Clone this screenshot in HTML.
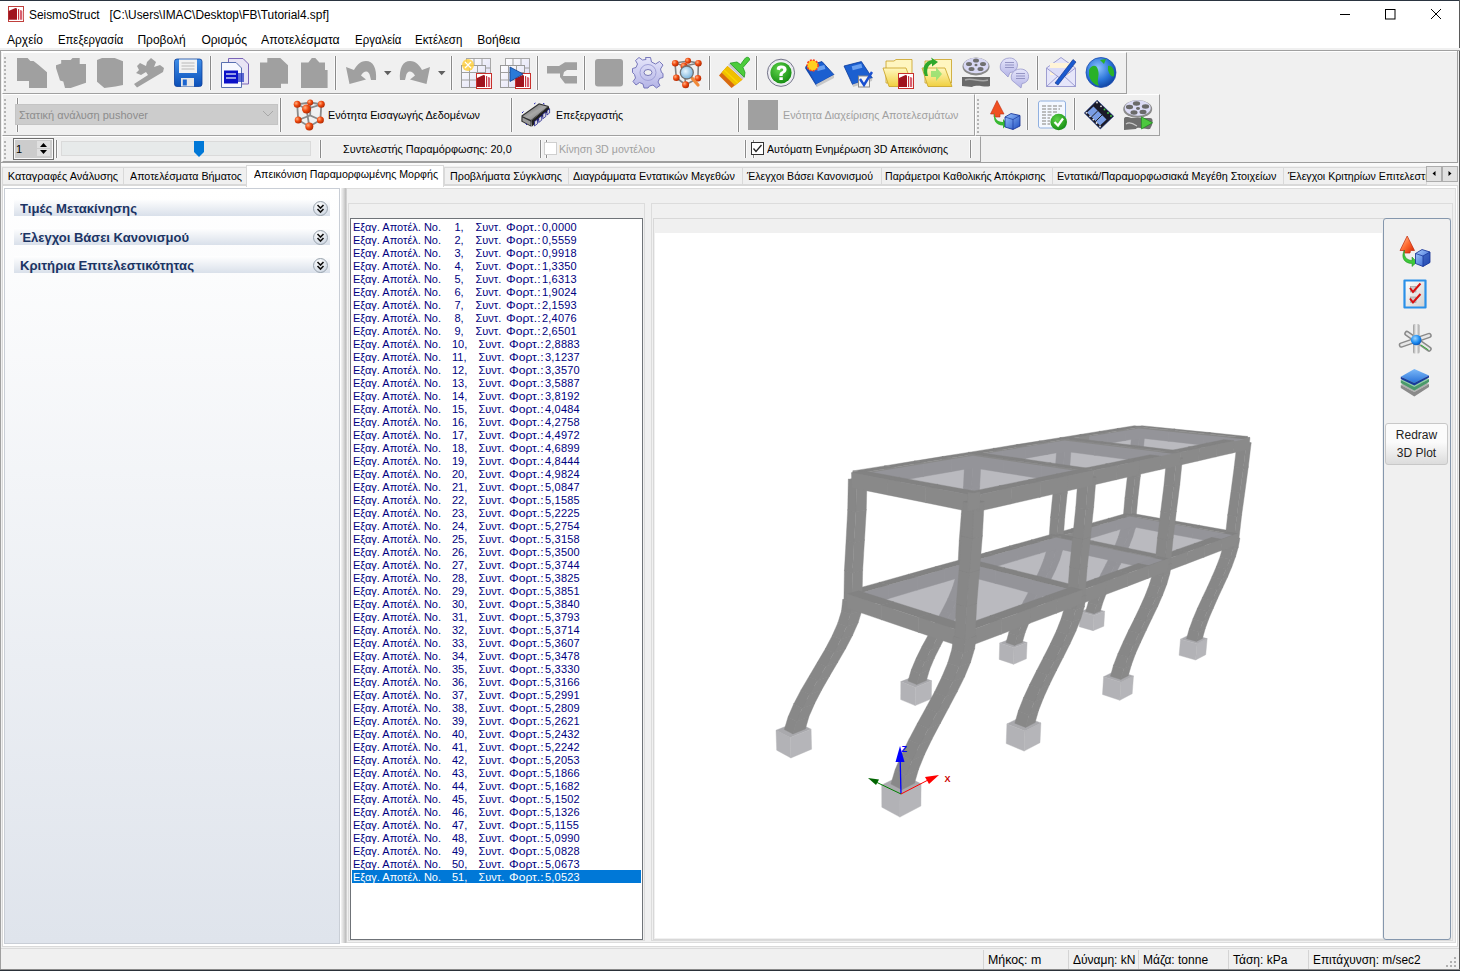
<!DOCTYPE html><html><head><meta charset="utf-8"><style>
*{margin:0;padding:0;box-sizing:border-box}
html,body{width:1460px;height:971px;overflow:hidden;background:#f0f0f0;font-family:"Liberation Sans",sans-serif;font-size:11px;color:#000}
.a{position:absolute}
.t{position:absolute;white-space:pre;line-height:1}
.s{display:inline-block;transform-origin:0 0}
</style></head><body>
<div class="a" style="left:0;top:0;width:1460px;height:1px;background:#2a3440"></div>
<div class="a" style="left:0;top:1px;width:1460px;height:47px;background:#fff"></div>
<div class="a" style="left:1459px;top:0;width:1px;height:971px;background:#5a5a5a"></div>
<div class="t" style="left:29px;top:9px;font-size:12px;color:#000;font-weight:normal;"><span class="s" style="transform:scaleX(0.9902)">SeismoStruct   [C:\Users\IMAC\Desktop\FB\Tutorial4.spf]</span></div>
<div class="t" style="left:7px;top:34px;font-size:12px;color:#000;font-weight:normal;">Αρχείο</div>
<div class="t" style="left:57.5px;top:34px;font-size:12px;color:#000;font-weight:normal;"><span class="s" style="transform:scaleX(0.9430)">Επεξεργασία</span></div>
<div class="t" style="left:137.4px;top:34px;font-size:12px;color:#000;font-weight:normal;">Προβολή</div>
<div class="t" style="left:201.4px;top:34px;font-size:12px;color:#000;font-weight:normal;">Ορισμός</div>
<div class="t" style="left:261.1px;top:34px;font-size:12px;color:#000;font-weight:normal;"><span class="s" style="transform:scaleX(1.0244)">Αποτελέσματα</span></div>
<div class="t" style="left:354.6px;top:34px;font-size:12px;color:#000;font-weight:normal;"><span class="s" style="transform:scaleX(0.9542)">Εργαλεία</span></div>
<div class="t" style="left:415.3px;top:34px;font-size:12px;color:#000;font-weight:normal;"><span class="s" style="transform:scaleX(0.9550)">Εκτέλεση</span></div>
<div class="t" style="left:477.3px;top:34px;font-size:12px;color:#000;font-weight:normal;">Βοήθεια</div>
<div class="a" style="left:0;top:48px;width:1460px;height:2px;background:#f0f0f0"></div>
<div class="a" style="left:0;top:50px;width:1460px;height:1px;background:#a0a0a0"></div>
<div class="a" style="left:0;top:50px;width:1px;height:921px;background:#a0a0a0"></div>
<div class="a" style="left:1px;top:51px;width:1456px;height:1px;background:#fff"></div>
<div class="a" style="left:1457px;top:50px;width:1px;height:113px;background:#a0a0a0"></div>
<div class="a" style="left:0;top:162px;width:1458px;height:1px;background:#a0a0a0"></div>
<div class="a" style="left:2px;top:52px;width:1125px;height:42px;border-top:1px solid #fff;border-left:1px solid #fff;border-right:1px solid #a0a0a0;border-bottom:1px solid #a0a0a0;background:#f0f0f0"></div>
<div class="a" style="left:4px;top:57px;width:2px;height:2px;background:#b4b4b4"></div>
<div class="a" style="left:4px;top:61px;width:2px;height:2px;background:#b4b4b4"></div>
<div class="a" style="left:4px;top:65px;width:2px;height:2px;background:#b4b4b4"></div>
<div class="a" style="left:4px;top:69px;width:2px;height:2px;background:#b4b4b4"></div>
<div class="a" style="left:4px;top:73px;width:2px;height:2px;background:#b4b4b4"></div>
<div class="a" style="left:4px;top:77px;width:2px;height:2px;background:#b4b4b4"></div>
<div class="a" style="left:4px;top:81px;width:2px;height:2px;background:#b4b4b4"></div>
<div class="a" style="left:4px;top:85px;width:2px;height:2px;background:#b4b4b4"></div>
<div class="a" style="left:4px;top:89px;width:2px;height:2px;background:#b4b4b4"></div>
<div class="a" style="left:2px;top:94px;width:973px;height:42px;border-top:1px solid #fff;border-left:1px solid #fff;border-right:1px solid #a0a0a0;border-bottom:1px solid #a0a0a0;background:#f0f0f0"></div>
<div class="a" style="left:4px;top:99px;width:2px;height:2px;background:#b4b4b4"></div>
<div class="a" style="left:4px;top:103px;width:2px;height:2px;background:#b4b4b4"></div>
<div class="a" style="left:4px;top:107px;width:2px;height:2px;background:#b4b4b4"></div>
<div class="a" style="left:4px;top:111px;width:2px;height:2px;background:#b4b4b4"></div>
<div class="a" style="left:4px;top:115px;width:2px;height:2px;background:#b4b4b4"></div>
<div class="a" style="left:4px;top:119px;width:2px;height:2px;background:#b4b4b4"></div>
<div class="a" style="left:4px;top:123px;width:2px;height:2px;background:#b4b4b4"></div>
<div class="a" style="left:4px;top:127px;width:2px;height:2px;background:#b4b4b4"></div>
<div class="a" style="left:4px;top:131px;width:2px;height:2px;background:#b4b4b4"></div>
<div class="a" style="left:975px;top:94px;width:185px;height:42px;border-top:1px solid #fff;border-left:1px solid #fff;border-right:1px solid #a0a0a0;border-bottom:1px solid #a0a0a0;background:#f0f0f0"></div>
<div class="a" style="left:977px;top:99px;width:2px;height:2px;background:#b4b4b4"></div>
<div class="a" style="left:977px;top:103px;width:2px;height:2px;background:#b4b4b4"></div>
<div class="a" style="left:977px;top:107px;width:2px;height:2px;background:#b4b4b4"></div>
<div class="a" style="left:977px;top:111px;width:2px;height:2px;background:#b4b4b4"></div>
<div class="a" style="left:977px;top:115px;width:2px;height:2px;background:#b4b4b4"></div>
<div class="a" style="left:977px;top:119px;width:2px;height:2px;background:#b4b4b4"></div>
<div class="a" style="left:977px;top:123px;width:2px;height:2px;background:#b4b4b4"></div>
<div class="a" style="left:977px;top:127px;width:2px;height:2px;background:#b4b4b4"></div>
<div class="a" style="left:977px;top:131px;width:2px;height:2px;background:#b4b4b4"></div>
<div class="a" style="left:2px;top:136px;width:979px;height:26px;border-top:1px solid #fff;border-left:1px solid #fff;border-right:1px solid #a0a0a0;border-bottom:1px solid #a0a0a0;background:#f0f0f0"></div>
<div class="a" style="left:4px;top:141px;width:2px;height:2px;background:#b4b4b4"></div>
<div class="a" style="left:4px;top:145px;width:2px;height:2px;background:#b4b4b4"></div>
<div class="a" style="left:4px;top:149px;width:2px;height:2px;background:#b4b4b4"></div>
<div class="a" style="left:4px;top:153px;width:2px;height:2px;background:#b4b4b4"></div>
<div class="a" style="left:4px;top:157px;width:2px;height:2px;background:#b4b4b4"></div>
<div class="a" style="left:209px;top:56px;width:3px;height:34px;background:#fafafa"></div>
<div class="a" style="left:210px;top:56px;width:1px;height:34px;background:#8a8a8a"></div>
<div class="a" style="left:334px;top:56px;width:3px;height:34px;background:#fafafa"></div>
<div class="a" style="left:335px;top:56px;width:1px;height:34px;background:#8a8a8a"></div>
<div class="a" style="left:450px;top:56px;width:3px;height:34px;background:#fafafa"></div>
<div class="a" style="left:451px;top:56px;width:1px;height:34px;background:#8a8a8a"></div>
<div class="a" style="left:536px;top:56px;width:3px;height:34px;background:#fafafa"></div>
<div class="a" style="left:537px;top:56px;width:1px;height:34px;background:#8a8a8a"></div>
<div class="a" style="left:583px;top:56px;width:3px;height:34px;background:#fafafa"></div>
<div class="a" style="left:584px;top:56px;width:1px;height:34px;background:#8a8a8a"></div>
<div class="a" style="left:708px;top:56px;width:3px;height:34px;background:#fafafa"></div>
<div class="a" style="left:709px;top:56px;width:1px;height:34px;background:#8a8a8a"></div>
<div class="a" style="left:755px;top:56px;width:3px;height:34px;background:#fafafa"></div>
<div class="a" style="left:756px;top:56px;width:1px;height:34px;background:#8a8a8a"></div>
<div class="a" style="left:1036px;top:56px;width:3px;height:34px;background:#fafafa"></div>
<div class="a" style="left:1037px;top:56px;width:1px;height:34px;background:#8a8a8a"></div>
<div class="a" style="left:16px;top:98px;width:3px;height:34px;background:#fafafa"></div>
<div class="a" style="left:17px;top:98px;width:1px;height:34px;background:#8a8a8a"></div>
<div class="a" style="left:279px;top:98px;width:3px;height:34px;background:#fafafa"></div>
<div class="a" style="left:280px;top:98px;width:1px;height:34px;background:#8a8a8a"></div>
<div class="a" style="left:510px;top:98px;width:3px;height:34px;background:#fafafa"></div>
<div class="a" style="left:511px;top:98px;width:1px;height:34px;background:#8a8a8a"></div>
<div class="a" style="left:737px;top:98px;width:3px;height:34px;background:#fafafa"></div>
<div class="a" style="left:738px;top:98px;width:1px;height:34px;background:#8a8a8a"></div>
<div class="a" style="left:1026px;top:98px;width:3px;height:32px;background:#fafafa"></div>
<div class="a" style="left:1027px;top:98px;width:1px;height:32px;background:#8a8a8a"></div>
<div class="a" style="left:1073px;top:98px;width:3px;height:32px;background:#fafafa"></div>
<div class="a" style="left:1074px;top:98px;width:1px;height:32px;background:#8a8a8a"></div>
<div class="a" style="left:55px;top:140px;width:3px;height:18px;background:#fafafa"></div>
<div class="a" style="left:56px;top:140px;width:1px;height:18px;background:#8a8a8a"></div>
<div class="a" style="left:319px;top:140px;width:3px;height:18px;background:#fafafa"></div>
<div class="a" style="left:320px;top:140px;width:1px;height:18px;background:#8a8a8a"></div>
<div class="a" style="left:539px;top:140px;width:3px;height:18px;background:#fafafa"></div>
<div class="a" style="left:540px;top:140px;width:1px;height:18px;background:#8a8a8a"></div>
<div class="a" style="left:744px;top:140px;width:3px;height:18px;background:#fafafa"></div>
<div class="a" style="left:745px;top:140px;width:1px;height:18px;background:#8a8a8a"></div>
<div class="a" style="left:969px;top:140px;width:3px;height:18px;background:#fafafa"></div>
<div class="a" style="left:970px;top:140px;width:1px;height:18px;background:#8a8a8a"></div>
<div class="a" style="left:545px;top:140px;width:3px;height:18px;background:#fafafa"></div>
<div class="a" style="left:546px;top:140px;width:1px;height:18px;background:#8a8a8a"></div>
<div class="a" style="left:752px;top:140px;width:3px;height:18px;background:#fafafa"></div>
<div class="a" style="left:753px;top:140px;width:1px;height:18px;background:#8a8a8a"></div>
<div class="a" style="left:15px;top:104px;width:263px;height:21px;background:#cccccc;border:1px solid #c4c4c4"></div>
<div class="t" style="left:19px;top:110px;font-size:11px;color:#8d8d8d;font-weight:normal;">Στατική ανάλυση pushover</div>
<svg class="a" style="left:262px;top:110px" width="12" height="8"><path d="M1 1 L6 6 L11 1" stroke="#a8a8a8" fill="none" stroke-width="1"/></svg>
<div class="t" style="left:328px;top:110px;font-size:11px;color:#000;font-weight:normal;"><span class="s" style="transform:scaleX(0.9833)">Ενότητα Εισαγωγής Δεδομένων</span></div>
<div class="t" style="left:555.5px;top:110px;font-size:11px;color:#000;font-weight:normal;"><span class="s" style="transform:scaleX(0.9553)">Επεξεργαστής</span></div>
<div class="a" style="left:748px;top:100px;width:30px;height:30px;background:#a0a0a0"></div>
<div class="t" style="left:782.5px;top:110px;font-size:11px;color:#a0a0a0;font-weight:normal;"><span class="s" style="transform:scaleX(0.9802)">Ενότητα Διαχείρισης Αποτελεσμάτων</span></div>
<div class="a" style="left:13px;top:138px;width:41px;height:22px;border:1px solid #6e6e6e;background:#f8f8f8"></div>
<div class="a" style="left:15px;top:140px;width:37px;height:18px;background:#cccccc"></div>
<div class="t" style="left:16px;top:144px;font-size:11px;color:#000;font-weight:normal;">1</div>
<div class="a" style="left:37px;top:141px;width:13px;height:7px;background:#e0e0e0"></div>
<div class="a" style="left:37px;top:149px;width:13px;height:7px;background:#e0e0e0"></div>
<svg class="a" style="left:37px;top:141px" width="13" height="16"><path d="M3 6 L6.5 2 L10 6Z M3 9 L6.5 13 L10 9Z" fill="#000"/></svg>
<div class="a" style="left:61px;top:141px;width:250px;height:15px;background:#e7eaea;border:1px solid #dadada"></div>
<svg class="a" style="left:194px;top:141px" width="10" height="16"><path d="M0 0 H10 V11 L5 16 L0 11Z" fill="#0078d7"/></svg>
<div class="t" style="left:342.7px;top:144px;font-size:11px;color:#000;font-weight:normal;"><span class="s" style="transform:scaleX(0.9884)">Συντελεστής Παραμόρφωσης: 20,0</span></div>
<div class="a" style="left:544px;top:142px;width:13px;height:13px;border:1px solid #cfcfcf;background:#fff"></div>
<div class="t" style="left:559px;top:144px;font-size:11px;color:#a0a0a0;font-weight:normal;"><span class="s" style="transform:scaleX(0.9682)">Κίνηση 3D μοντέλου</span></div>
<div class="a" style="left:751px;top:142px;width:13px;height:13px;border:1px solid #333;background:#fff"></div>
<svg class="a" style="left:751px;top:142px" width="13" height="13"><path d="M2.5 6.5 L5 9.5 L10.5 3" stroke="#222" fill="none" stroke-width="1.3"/></svg>
<div class="t" style="left:767px;top:144px;font-size:11px;color:#000;font-weight:normal;"><span class="s" style="transform:scaleX(0.9624)">Αυτόματη Ενημέρωση 3D Απεικόνισης</span></div>
<div class="a" style="left:1px;top:163px;width:1458px;height:3px;background:#fafafa"></div>
<div class="a" style="left:2px;top:167px;width:122px;height:18px;border:1px solid #d9d9d9;background:#f0f0f0"></div>
<div class="t" style="left:7.7px;top:171px;font-size:11px;color:#000;font-weight:normal;">Καταγραφές Ανάλυσης</div>
<div class="a" style="left:123px;top:167px;width:124px;height:18px;border:1px solid #d9d9d9;background:#f0f0f0"></div>
<div class="t" style="left:129.8px;top:171px;font-size:11px;color:#000;font-weight:normal;"><span class="s" style="transform:scaleX(0.9718)">Αποτελέσματα Βήματος</span></div>
<div class="a" style="left:444px;top:167px;width:125px;height:18px;border:1px solid #d9d9d9;background:#f0f0f0"></div>
<div class="t" style="left:449.5px;top:171px;font-size:11px;color:#000;font-weight:normal;"><span class="s" style="transform:scaleX(0.9778)">Προβλήματα Σύγκλισης</span></div>
<div class="a" style="left:568px;top:167px;width:175px;height:18px;border:1px solid #d9d9d9;background:#f0f0f0"></div>
<div class="t" style="left:573.3px;top:171px;font-size:11px;color:#000;font-weight:normal;"><span class="s" style="transform:scaleX(0.9861)">Διαγράμματα Εντατικών Μεγεθών</span></div>
<div class="a" style="left:742px;top:167px;width:140px;height:18px;border:1px solid #d9d9d9;background:#f0f0f0"></div>
<div class="t" style="left:747px;top:171px;font-size:11px;color:#000;font-weight:normal;"><span class="s" style="transform:scaleX(0.9625)">Έλεγχοι Βάσει Κανονισμού</span></div>
<div class="a" style="left:881px;top:167px;width:172px;height:18px;border:1px solid #d9d9d9;background:#f0f0f0"></div>
<div class="t" style="left:885.4px;top:171px;font-size:11px;color:#000;font-weight:normal;"><span class="s" style="transform:scaleX(0.9619)">Παράμετροι Καθολικής Απόκρισης</span></div>
<div class="a" style="left:1052px;top:167px;width:232px;height:18px;border:1px solid #d9d9d9;background:#f0f0f0"></div>
<div class="t" style="left:1056.7px;top:171px;font-size:11px;color:#000;font-weight:normal;"><span class="s" style="transform:scaleX(0.9848)">Εντατικά/Παραμορφωσιακά Μεγέθη Στοιχείων</span></div>
<div class="a" style="left:1283px;top:167px;width:144px;height:18px;border:1px solid #d9d9d9;background:#f0f0f0"></div>
<div class="a" style="left:1284px;top:168px;width:142px;height:16px;overflow:hidden">
<div class="t" style="left:4px;top:3px;font-size:11px;color:#000;font-weight:normal;transform:scaleX(0.965);transform-origin:0 0;">Έλεγχοι Κριτηρίων Επιτελεστικότητας</div>
</div>
<div class="a" style="left:2px;top:185px;width:1456px;height:762px;border:1px solid #d9d9d9;background:#fff"></div>
<div class="a" style="left:246px;top:165px;width:198px;height:22px;border:1px solid #d9d9d9;border-bottom:none;background:#fff"></div>
<div class="t" style="left:253.8px;top:169px;font-size:11px;color:#000;font-weight:normal;"><span class="s" style="transform:scaleX(0.9668)">Απεικόνιση Παραμορφωμένης Μορφής</span></div>
<div class="a" style="left:1426px;top:166px;width:16px;height:16px;border:1px solid #adadad;background:#e1e1e1"></div>
<div class="a" style="left:1442px;top:166px;width:16px;height:16px;border:1px solid #adadad;background:#e1e1e1"></div>
<svg class="a" style="left:1426px;top:166px" width="32" height="16"><path d="M9.5 5 L6.5 7.5 L9.5 10Z M22.5 5 L25.5 7.5 L22.5 10Z" fill="#000"/></svg>
<div class="a" style="left:4px;top:188px;width:336px;height:756px;border:1px solid #c9ced6;background:linear-gradient(#ffffff,#dfe4ec)"></div>
<div class="a" style="left:14px;top:199px;width:316px;height:17px;background:linear-gradient(#ffffff,#d9e0ea)"></div>
<div class="t" style="left:20px;top:202px;font-size:13px;color:#1b3464;font-weight:bold;"><span class="s" style="transform:scaleX(1.0123)">Τιμές Μετακίνησης</span></div>
<svg class="a" style="left:312px;top:200px" width="17" height="17"><defs><radialGradient id="g199" cx="0.4" cy="0.3" r="0.8"><stop offset="0" stop-color="#fff"/><stop offset="1" stop-color="#c9d3e0"/></radialGradient></defs><circle cx="8.5" cy="8.5" r="7" fill="url(#g199)" stroke="#9aa4ae"/><path d="M5.5 5 L8.5 8 L11.5 5 M5.5 9 L8.5 12 L11.5 9" stroke="#111" fill="none" stroke-width="1.6"/></svg>
<div class="a" style="left:14px;top:228px;width:316px;height:17px;background:linear-gradient(#ffffff,#d9e0ea)"></div>
<div class="t" style="left:20px;top:231px;font-size:13px;color:#1b3464;font-weight:bold;">Έλεγχοι Βάσει Κανονισμού</div>
<svg class="a" style="left:312px;top:229px" width="17" height="17"><defs><radialGradient id="g228" cx="0.4" cy="0.3" r="0.8"><stop offset="0" stop-color="#fff"/><stop offset="1" stop-color="#c9d3e0"/></radialGradient></defs><circle cx="8.5" cy="8.5" r="7" fill="url(#g228)" stroke="#9aa4ae"/><path d="M5.5 5 L8.5 8 L11.5 5 M5.5 9 L8.5 12 L11.5 9" stroke="#111" fill="none" stroke-width="1.6"/></svg>
<div class="a" style="left:14px;top:256px;width:316px;height:17px;background:linear-gradient(#ffffff,#d9e0ea)"></div>
<div class="t" style="left:20px;top:259px;font-size:13px;color:#1b3464;font-weight:bold;"><span class="s" style="transform:scaleX(1.0099)">Κριτήρια Επιτελεστικότητας</span></div>
<svg class="a" style="left:312px;top:257px" width="17" height="17"><defs><radialGradient id="g256" cx="0.4" cy="0.3" r="0.8"><stop offset="0" stop-color="#fff"/><stop offset="1" stop-color="#c9d3e0"/></radialGradient></defs><circle cx="8.5" cy="8.5" r="7" fill="url(#g256)" stroke="#9aa4ae"/><path d="M5.5 5 L8.5 8 L11.5 5 M5.5 9 L8.5 12 L11.5 9" stroke="#111" fill="none" stroke-width="1.6"/></svg>
<div class="a" style="left:341px;top:188px;width:6px;height:755px;background:linear-gradient(90deg,#f4f4f4,#d8d8d8 45%,#bdbdbd 80%,#e0e0e0)"></div>
<div class="a" style="left:347px;top:188px;width:1109px;height:755px;background:#f0f0f0;border-top:1px solid #dcdcdc;border-right:1px solid #dcdcdc;border-bottom:1px solid #dcdcdc"></div>
<div class="a" style="left:348px;top:203px;width:297px;height:738px;border:1px solid #dcdcdc"></div>
<div class="a" style="left:350px;top:218px;width:293px;height:722px;border:1px solid #6f7378;background:#fff"></div>
<div class="a" style="left:651px;top:203px;width:802px;height:738px;border:1px solid #dcdcdc"></div>
<div class="a" style="left:653px;top:218px;width:798px;height:722px;border:1px solid #d8d8d8;background:#f0f0f0"></div>
<div class="a" style="left:655px;top:233px;width:727px;height:705px;background:#fff"></div>
<div class="a" style="left:1383px;top:218px;width:68px;height:722px;border:1px solid #8597ad;border-radius:3px;background:#f0f0f0"></div>
<div class="a" style="left:1385px;top:423px;width:63px;height:42px;border:1px solid #c8c8c8;border-radius:3px;background:linear-gradient(#fbfbfb 45%,#dcdcdc)"></div>
<div class="t" style="left:1385px;top:426px;width:63px;text-align:center;font-size:12px;line-height:18px;color:#222">Redraw<br>3D Plot</div>
<div class="a" style="left:1px;top:948px;width:1458px;height:1px;background:#dadada"></div>
<div class="a" style="left:983px;top:950px;width:1px;height:19px;background:#d4d4d4"></div>
<div class="a" style="left:1068px;top:950px;width:1px;height:19px;background:#d4d4d4"></div>
<div class="a" style="left:1138px;top:950px;width:1px;height:19px;background:#d4d4d4"></div>
<div class="a" style="left:1228px;top:950px;width:1px;height:19px;background:#d4d4d4"></div>
<div class="a" style="left:1308px;top:950px;width:1px;height:19px;background:#d4d4d4"></div>
<div class="t" style="left:988.3px;top:954px;font-size:12px;color:#000;font-weight:normal;"><span class="s" style="transform:scaleX(1.0299)">Μήκος: m</span></div>
<div class="t" style="left:1073px;top:954px;font-size:12px;color:#000;font-weight:normal;">Δύναμη: kN</div>
<div class="t" style="left:1143px;top:954px;font-size:12px;color:#000;font-weight:normal;">Μάζα: tonne</div>
<div class="t" style="left:1233px;top:954px;font-size:12px;color:#000;font-weight:normal;">Τάση: kPa</div>
<div class="t" style="left:1313.4px;top:954px;font-size:12px;color:#000;font-weight:normal;"><span class="s" style="transform:scaleX(0.9894)">Επιτάχυνση: m/sec2</span></div>
<svg class="a" style="left:1446px;top:957px" width="12" height="12"><g fill="#b0b0b0"><rect x="8" y="0" width="2" height="2"/><rect x="4" y="4" width="2" height="2"/><rect x="8" y="4" width="2" height="2"/><rect x="0" y="8" width="2" height="2"/><rect x="4" y="8" width="2" height="2"/><rect x="8" y="8" width="2" height="2"/></g></svg>
<div class="a" style="left:0;top:969px;width:1460px;height:1px;background:#8a8a8a"></div>
<div class="a" style="left:0;top:970px;width:1460px;height:1px;background:#2a3038"></div>
<div class="t" style="left:353px;top:222px;color:#000080">Εξαγ. Αποτέλ. No.</div><div class="t" style="left:454.5px;top:222px;color:#000080">1,</div><div class="t" style="left:475.5px;top:222px;color:#000080">Συντ.</div><div class="t" style="left:506px;top:222px;color:#000080;transform:scaleX(1.1);transform-origin:0 0">Φορτ.:</div><div class="t" style="left:542px;top:222px;color:#000080;letter-spacing:0.2px">0,0000</div>
<div class="t" style="left:353px;top:235px;color:#000080">Εξαγ. Αποτέλ. No.</div><div class="t" style="left:454.5px;top:235px;color:#000080">2,</div><div class="t" style="left:475.5px;top:235px;color:#000080">Συντ.</div><div class="t" style="left:506px;top:235px;color:#000080;transform:scaleX(1.1);transform-origin:0 0">Φορτ.:</div><div class="t" style="left:542px;top:235px;color:#000080;letter-spacing:0.2px">0,5559</div>
<div class="t" style="left:353px;top:248px;color:#000080">Εξαγ. Αποτέλ. No.</div><div class="t" style="left:454.5px;top:248px;color:#000080">3,</div><div class="t" style="left:475.5px;top:248px;color:#000080">Συντ.</div><div class="t" style="left:506px;top:248px;color:#000080;transform:scaleX(1.1);transform-origin:0 0">Φορτ.:</div><div class="t" style="left:542px;top:248px;color:#000080;letter-spacing:0.2px">0,9918</div>
<div class="t" style="left:353px;top:261px;color:#000080">Εξαγ. Αποτέλ. No.</div><div class="t" style="left:454.5px;top:261px;color:#000080">4,</div><div class="t" style="left:475.5px;top:261px;color:#000080">Συντ.</div><div class="t" style="left:506px;top:261px;color:#000080;transform:scaleX(1.1);transform-origin:0 0">Φορτ.:</div><div class="t" style="left:542px;top:261px;color:#000080;letter-spacing:0.2px">1,3350</div>
<div class="t" style="left:353px;top:274px;color:#000080">Εξαγ. Αποτέλ. No.</div><div class="t" style="left:454.5px;top:274px;color:#000080">5,</div><div class="t" style="left:475.5px;top:274px;color:#000080">Συντ.</div><div class="t" style="left:506px;top:274px;color:#000080;transform:scaleX(1.1);transform-origin:0 0">Φορτ.:</div><div class="t" style="left:542px;top:274px;color:#000080;letter-spacing:0.2px">1,6313</div>
<div class="t" style="left:353px;top:287px;color:#000080">Εξαγ. Αποτέλ. No.</div><div class="t" style="left:454.5px;top:287px;color:#000080">6,</div><div class="t" style="left:475.5px;top:287px;color:#000080">Συντ.</div><div class="t" style="left:506px;top:287px;color:#000080;transform:scaleX(1.1);transform-origin:0 0">Φορτ.:</div><div class="t" style="left:542px;top:287px;color:#000080;letter-spacing:0.2px">1,9024</div>
<div class="t" style="left:353px;top:300px;color:#000080">Εξαγ. Αποτέλ. No.</div><div class="t" style="left:454.5px;top:300px;color:#000080">7,</div><div class="t" style="left:475.5px;top:300px;color:#000080">Συντ.</div><div class="t" style="left:506px;top:300px;color:#000080;transform:scaleX(1.1);transform-origin:0 0">Φορτ.:</div><div class="t" style="left:542px;top:300px;color:#000080;letter-spacing:0.2px">2,1593</div>
<div class="t" style="left:353px;top:313px;color:#000080">Εξαγ. Αποτέλ. No.</div><div class="t" style="left:454.5px;top:313px;color:#000080">8,</div><div class="t" style="left:475.5px;top:313px;color:#000080">Συντ.</div><div class="t" style="left:506px;top:313px;color:#000080;transform:scaleX(1.1);transform-origin:0 0">Φορτ.:</div><div class="t" style="left:542px;top:313px;color:#000080;letter-spacing:0.2px">2,4076</div>
<div class="t" style="left:353px;top:326px;color:#000080">Εξαγ. Αποτέλ. No.</div><div class="t" style="left:454.5px;top:326px;color:#000080">9,</div><div class="t" style="left:475.5px;top:326px;color:#000080">Συντ.</div><div class="t" style="left:506px;top:326px;color:#000080;transform:scaleX(1.1);transform-origin:0 0">Φορτ.:</div><div class="t" style="left:542px;top:326px;color:#000080;letter-spacing:0.2px">2,6501</div>
<div class="t" style="left:353px;top:339px;color:#000080">Εξαγ. Αποτέλ. No.</div><div class="t" style="left:452px;top:339px;color:#000080">10,</div><div class="t" style="left:478.5px;top:339px;color:#000080">Συντ.</div><div class="t" style="left:509px;top:339px;color:#000080;transform:scaleX(1.1);transform-origin:0 0">Φορτ.:</div><div class="t" style="left:545px;top:339px;color:#000080;letter-spacing:0.2px">2,8883</div>
<div class="t" style="left:353px;top:352px;color:#000080">Εξαγ. Αποτέλ. No.</div><div class="t" style="left:452px;top:352px;color:#000080">11,</div><div class="t" style="left:478.5px;top:352px;color:#000080">Συντ.</div><div class="t" style="left:509px;top:352px;color:#000080;transform:scaleX(1.1);transform-origin:0 0">Φορτ.:</div><div class="t" style="left:545px;top:352px;color:#000080;letter-spacing:0.2px">3,1237</div>
<div class="t" style="left:353px;top:365px;color:#000080">Εξαγ. Αποτέλ. No.</div><div class="t" style="left:452px;top:365px;color:#000080">12,</div><div class="t" style="left:478.5px;top:365px;color:#000080">Συντ.</div><div class="t" style="left:509px;top:365px;color:#000080;transform:scaleX(1.1);transform-origin:0 0">Φορτ.:</div><div class="t" style="left:545px;top:365px;color:#000080;letter-spacing:0.2px">3,3570</div>
<div class="t" style="left:353px;top:378px;color:#000080">Εξαγ. Αποτέλ. No.</div><div class="t" style="left:452px;top:378px;color:#000080">13,</div><div class="t" style="left:478.5px;top:378px;color:#000080">Συντ.</div><div class="t" style="left:509px;top:378px;color:#000080;transform:scaleX(1.1);transform-origin:0 0">Φορτ.:</div><div class="t" style="left:545px;top:378px;color:#000080;letter-spacing:0.2px">3,5887</div>
<div class="t" style="left:353px;top:391px;color:#000080">Εξαγ. Αποτέλ. No.</div><div class="t" style="left:452px;top:391px;color:#000080">14,</div><div class="t" style="left:478.5px;top:391px;color:#000080">Συντ.</div><div class="t" style="left:509px;top:391px;color:#000080;transform:scaleX(1.1);transform-origin:0 0">Φορτ.:</div><div class="t" style="left:545px;top:391px;color:#000080;letter-spacing:0.2px">3,8192</div>
<div class="t" style="left:353px;top:404px;color:#000080">Εξαγ. Αποτέλ. No.</div><div class="t" style="left:452px;top:404px;color:#000080">15,</div><div class="t" style="left:478.5px;top:404px;color:#000080">Συντ.</div><div class="t" style="left:509px;top:404px;color:#000080;transform:scaleX(1.1);transform-origin:0 0">Φορτ.:</div><div class="t" style="left:545px;top:404px;color:#000080;letter-spacing:0.2px">4,0484</div>
<div class="t" style="left:353px;top:417px;color:#000080">Εξαγ. Αποτέλ. No.</div><div class="t" style="left:452px;top:417px;color:#000080">16,</div><div class="t" style="left:478.5px;top:417px;color:#000080">Συντ.</div><div class="t" style="left:509px;top:417px;color:#000080;transform:scaleX(1.1);transform-origin:0 0">Φορτ.:</div><div class="t" style="left:545px;top:417px;color:#000080;letter-spacing:0.2px">4,2758</div>
<div class="t" style="left:353px;top:430px;color:#000080">Εξαγ. Αποτέλ. No.</div><div class="t" style="left:452px;top:430px;color:#000080">17,</div><div class="t" style="left:478.5px;top:430px;color:#000080">Συντ.</div><div class="t" style="left:509px;top:430px;color:#000080;transform:scaleX(1.1);transform-origin:0 0">Φορτ.:</div><div class="t" style="left:545px;top:430px;color:#000080;letter-spacing:0.2px">4,4972</div>
<div class="t" style="left:353px;top:443px;color:#000080">Εξαγ. Αποτέλ. No.</div><div class="t" style="left:452px;top:443px;color:#000080">18,</div><div class="t" style="left:478.5px;top:443px;color:#000080">Συντ.</div><div class="t" style="left:509px;top:443px;color:#000080;transform:scaleX(1.1);transform-origin:0 0">Φορτ.:</div><div class="t" style="left:545px;top:443px;color:#000080;letter-spacing:0.2px">4,6899</div>
<div class="t" style="left:353px;top:456px;color:#000080">Εξαγ. Αποτέλ. No.</div><div class="t" style="left:452px;top:456px;color:#000080">19,</div><div class="t" style="left:478.5px;top:456px;color:#000080">Συντ.</div><div class="t" style="left:509px;top:456px;color:#000080;transform:scaleX(1.1);transform-origin:0 0">Φορτ.:</div><div class="t" style="left:545px;top:456px;color:#000080;letter-spacing:0.2px">4,8444</div>
<div class="t" style="left:353px;top:469px;color:#000080">Εξαγ. Αποτέλ. No.</div><div class="t" style="left:452px;top:469px;color:#000080">20,</div><div class="t" style="left:478.5px;top:469px;color:#000080">Συντ.</div><div class="t" style="left:509px;top:469px;color:#000080;transform:scaleX(1.1);transform-origin:0 0">Φορτ.:</div><div class="t" style="left:545px;top:469px;color:#000080;letter-spacing:0.2px">4,9824</div>
<div class="t" style="left:353px;top:482px;color:#000080">Εξαγ. Αποτέλ. No.</div><div class="t" style="left:452px;top:482px;color:#000080">21,</div><div class="t" style="left:478.5px;top:482px;color:#000080">Συντ.</div><div class="t" style="left:509px;top:482px;color:#000080;transform:scaleX(1.1);transform-origin:0 0">Φορτ.:</div><div class="t" style="left:545px;top:482px;color:#000080;letter-spacing:0.2px">5,0847</div>
<div class="t" style="left:353px;top:495px;color:#000080">Εξαγ. Αποτέλ. No.</div><div class="t" style="left:452px;top:495px;color:#000080">22,</div><div class="t" style="left:478.5px;top:495px;color:#000080">Συντ.</div><div class="t" style="left:509px;top:495px;color:#000080;transform:scaleX(1.1);transform-origin:0 0">Φορτ.:</div><div class="t" style="left:545px;top:495px;color:#000080;letter-spacing:0.2px">5,1585</div>
<div class="t" style="left:353px;top:508px;color:#000080">Εξαγ. Αποτέλ. No.</div><div class="t" style="left:452px;top:508px;color:#000080">23,</div><div class="t" style="left:478.5px;top:508px;color:#000080">Συντ.</div><div class="t" style="left:509px;top:508px;color:#000080;transform:scaleX(1.1);transform-origin:0 0">Φορτ.:</div><div class="t" style="left:545px;top:508px;color:#000080;letter-spacing:0.2px">5,2225</div>
<div class="t" style="left:353px;top:521px;color:#000080">Εξαγ. Αποτέλ. No.</div><div class="t" style="left:452px;top:521px;color:#000080">24,</div><div class="t" style="left:478.5px;top:521px;color:#000080">Συντ.</div><div class="t" style="left:509px;top:521px;color:#000080;transform:scaleX(1.1);transform-origin:0 0">Φορτ.:</div><div class="t" style="left:545px;top:521px;color:#000080;letter-spacing:0.2px">5,2754</div>
<div class="t" style="left:353px;top:534px;color:#000080">Εξαγ. Αποτέλ. No.</div><div class="t" style="left:452px;top:534px;color:#000080">25,</div><div class="t" style="left:478.5px;top:534px;color:#000080">Συντ.</div><div class="t" style="left:509px;top:534px;color:#000080;transform:scaleX(1.1);transform-origin:0 0">Φορτ.:</div><div class="t" style="left:545px;top:534px;color:#000080;letter-spacing:0.2px">5,3158</div>
<div class="t" style="left:353px;top:547px;color:#000080">Εξαγ. Αποτέλ. No.</div><div class="t" style="left:452px;top:547px;color:#000080">26,</div><div class="t" style="left:478.5px;top:547px;color:#000080">Συντ.</div><div class="t" style="left:509px;top:547px;color:#000080;transform:scaleX(1.1);transform-origin:0 0">Φορτ.:</div><div class="t" style="left:545px;top:547px;color:#000080;letter-spacing:0.2px">5,3500</div>
<div class="t" style="left:353px;top:560px;color:#000080">Εξαγ. Αποτέλ. No.</div><div class="t" style="left:452px;top:560px;color:#000080">27,</div><div class="t" style="left:478.5px;top:560px;color:#000080">Συντ.</div><div class="t" style="left:509px;top:560px;color:#000080;transform:scaleX(1.1);transform-origin:0 0">Φορτ.:</div><div class="t" style="left:545px;top:560px;color:#000080;letter-spacing:0.2px">5,3744</div>
<div class="t" style="left:353px;top:573px;color:#000080">Εξαγ. Αποτέλ. No.</div><div class="t" style="left:452px;top:573px;color:#000080">28,</div><div class="t" style="left:478.5px;top:573px;color:#000080">Συντ.</div><div class="t" style="left:509px;top:573px;color:#000080;transform:scaleX(1.1);transform-origin:0 0">Φορτ.:</div><div class="t" style="left:545px;top:573px;color:#000080;letter-spacing:0.2px">5,3825</div>
<div class="t" style="left:353px;top:586px;color:#000080">Εξαγ. Αποτέλ. No.</div><div class="t" style="left:452px;top:586px;color:#000080">29,</div><div class="t" style="left:478.5px;top:586px;color:#000080">Συντ.</div><div class="t" style="left:509px;top:586px;color:#000080;transform:scaleX(1.1);transform-origin:0 0">Φορτ.:</div><div class="t" style="left:545px;top:586px;color:#000080;letter-spacing:0.2px">5,3851</div>
<div class="t" style="left:353px;top:599px;color:#000080">Εξαγ. Αποτέλ. No.</div><div class="t" style="left:452px;top:599px;color:#000080">30,</div><div class="t" style="left:478.5px;top:599px;color:#000080">Συντ.</div><div class="t" style="left:509px;top:599px;color:#000080;transform:scaleX(1.1);transform-origin:0 0">Φορτ.:</div><div class="t" style="left:545px;top:599px;color:#000080;letter-spacing:0.2px">5,3840</div>
<div class="t" style="left:353px;top:612px;color:#000080">Εξαγ. Αποτέλ. No.</div><div class="t" style="left:452px;top:612px;color:#000080">31,</div><div class="t" style="left:478.5px;top:612px;color:#000080">Συντ.</div><div class="t" style="left:509px;top:612px;color:#000080;transform:scaleX(1.1);transform-origin:0 0">Φορτ.:</div><div class="t" style="left:545px;top:612px;color:#000080;letter-spacing:0.2px">5,3793</div>
<div class="t" style="left:353px;top:625px;color:#000080">Εξαγ. Αποτέλ. No.</div><div class="t" style="left:452px;top:625px;color:#000080">32,</div><div class="t" style="left:478.5px;top:625px;color:#000080">Συντ.</div><div class="t" style="left:509px;top:625px;color:#000080;transform:scaleX(1.1);transform-origin:0 0">Φορτ.:</div><div class="t" style="left:545px;top:625px;color:#000080;letter-spacing:0.2px">5,3714</div>
<div class="t" style="left:353px;top:638px;color:#000080">Εξαγ. Αποτέλ. No.</div><div class="t" style="left:452px;top:638px;color:#000080">33,</div><div class="t" style="left:478.5px;top:638px;color:#000080">Συντ.</div><div class="t" style="left:509px;top:638px;color:#000080;transform:scaleX(1.1);transform-origin:0 0">Φορτ.:</div><div class="t" style="left:545px;top:638px;color:#000080;letter-spacing:0.2px">5,3607</div>
<div class="t" style="left:353px;top:651px;color:#000080">Εξαγ. Αποτέλ. No.</div><div class="t" style="left:452px;top:651px;color:#000080">34,</div><div class="t" style="left:478.5px;top:651px;color:#000080">Συντ.</div><div class="t" style="left:509px;top:651px;color:#000080;transform:scaleX(1.1);transform-origin:0 0">Φορτ.:</div><div class="t" style="left:545px;top:651px;color:#000080;letter-spacing:0.2px">5,3478</div>
<div class="t" style="left:353px;top:664px;color:#000080">Εξαγ. Αποτέλ. No.</div><div class="t" style="left:452px;top:664px;color:#000080">35,</div><div class="t" style="left:478.5px;top:664px;color:#000080">Συντ.</div><div class="t" style="left:509px;top:664px;color:#000080;transform:scaleX(1.1);transform-origin:0 0">Φορτ.:</div><div class="t" style="left:545px;top:664px;color:#000080;letter-spacing:0.2px">5,3330</div>
<div class="t" style="left:353px;top:677px;color:#000080">Εξαγ. Αποτέλ. No.</div><div class="t" style="left:452px;top:677px;color:#000080">36,</div><div class="t" style="left:478.5px;top:677px;color:#000080">Συντ.</div><div class="t" style="left:509px;top:677px;color:#000080;transform:scaleX(1.1);transform-origin:0 0">Φορτ.:</div><div class="t" style="left:545px;top:677px;color:#000080;letter-spacing:0.2px">5,3166</div>
<div class="t" style="left:353px;top:690px;color:#000080">Εξαγ. Αποτέλ. No.</div><div class="t" style="left:452px;top:690px;color:#000080">37,</div><div class="t" style="left:478.5px;top:690px;color:#000080">Συντ.</div><div class="t" style="left:509px;top:690px;color:#000080;transform:scaleX(1.1);transform-origin:0 0">Φορτ.:</div><div class="t" style="left:545px;top:690px;color:#000080;letter-spacing:0.2px">5,2991</div>
<div class="t" style="left:353px;top:703px;color:#000080">Εξαγ. Αποτέλ. No.</div><div class="t" style="left:452px;top:703px;color:#000080">38,</div><div class="t" style="left:478.5px;top:703px;color:#000080">Συντ.</div><div class="t" style="left:509px;top:703px;color:#000080;transform:scaleX(1.1);transform-origin:0 0">Φορτ.:</div><div class="t" style="left:545px;top:703px;color:#000080;letter-spacing:0.2px">5,2809</div>
<div class="t" style="left:353px;top:716px;color:#000080">Εξαγ. Αποτέλ. No.</div><div class="t" style="left:452px;top:716px;color:#000080">39,</div><div class="t" style="left:478.5px;top:716px;color:#000080">Συντ.</div><div class="t" style="left:509px;top:716px;color:#000080;transform:scaleX(1.1);transform-origin:0 0">Φορτ.:</div><div class="t" style="left:545px;top:716px;color:#000080;letter-spacing:0.2px">5,2621</div>
<div class="t" style="left:353px;top:729px;color:#000080">Εξαγ. Αποτέλ. No.</div><div class="t" style="left:452px;top:729px;color:#000080">40,</div><div class="t" style="left:478.5px;top:729px;color:#000080">Συντ.</div><div class="t" style="left:509px;top:729px;color:#000080;transform:scaleX(1.1);transform-origin:0 0">Φορτ.:</div><div class="t" style="left:545px;top:729px;color:#000080;letter-spacing:0.2px">5,2432</div>
<div class="t" style="left:353px;top:742px;color:#000080">Εξαγ. Αποτέλ. No.</div><div class="t" style="left:452px;top:742px;color:#000080">41,</div><div class="t" style="left:478.5px;top:742px;color:#000080">Συντ.</div><div class="t" style="left:509px;top:742px;color:#000080;transform:scaleX(1.1);transform-origin:0 0">Φορτ.:</div><div class="t" style="left:545px;top:742px;color:#000080;letter-spacing:0.2px">5,2242</div>
<div class="t" style="left:353px;top:755px;color:#000080">Εξαγ. Αποτέλ. No.</div><div class="t" style="left:452px;top:755px;color:#000080">42,</div><div class="t" style="left:478.5px;top:755px;color:#000080">Συντ.</div><div class="t" style="left:509px;top:755px;color:#000080;transform:scaleX(1.1);transform-origin:0 0">Φορτ.:</div><div class="t" style="left:545px;top:755px;color:#000080;letter-spacing:0.2px">5,2053</div>
<div class="t" style="left:353px;top:768px;color:#000080">Εξαγ. Αποτέλ. No.</div><div class="t" style="left:452px;top:768px;color:#000080">43,</div><div class="t" style="left:478.5px;top:768px;color:#000080">Συντ.</div><div class="t" style="left:509px;top:768px;color:#000080;transform:scaleX(1.1);transform-origin:0 0">Φορτ.:</div><div class="t" style="left:545px;top:768px;color:#000080;letter-spacing:0.2px">5,1866</div>
<div class="t" style="left:353px;top:781px;color:#000080">Εξαγ. Αποτέλ. No.</div><div class="t" style="left:452px;top:781px;color:#000080">44,</div><div class="t" style="left:478.5px;top:781px;color:#000080">Συντ.</div><div class="t" style="left:509px;top:781px;color:#000080;transform:scaleX(1.1);transform-origin:0 0">Φορτ.:</div><div class="t" style="left:545px;top:781px;color:#000080;letter-spacing:0.2px">5,1682</div>
<div class="t" style="left:353px;top:794px;color:#000080">Εξαγ. Αποτέλ. No.</div><div class="t" style="left:452px;top:794px;color:#000080">45,</div><div class="t" style="left:478.5px;top:794px;color:#000080">Συντ.</div><div class="t" style="left:509px;top:794px;color:#000080;transform:scaleX(1.1);transform-origin:0 0">Φορτ.:</div><div class="t" style="left:545px;top:794px;color:#000080;letter-spacing:0.2px">5,1502</div>
<div class="t" style="left:353px;top:807px;color:#000080">Εξαγ. Αποτέλ. No.</div><div class="t" style="left:452px;top:807px;color:#000080">46,</div><div class="t" style="left:478.5px;top:807px;color:#000080">Συντ.</div><div class="t" style="left:509px;top:807px;color:#000080;transform:scaleX(1.1);transform-origin:0 0">Φορτ.:</div><div class="t" style="left:545px;top:807px;color:#000080;letter-spacing:0.2px">5,1326</div>
<div class="t" style="left:353px;top:820px;color:#000080">Εξαγ. Αποτέλ. No.</div><div class="t" style="left:452px;top:820px;color:#000080">47,</div><div class="t" style="left:478.5px;top:820px;color:#000080">Συντ.</div><div class="t" style="left:509px;top:820px;color:#000080;transform:scaleX(1.1);transform-origin:0 0">Φορτ.:</div><div class="t" style="left:545px;top:820px;color:#000080;letter-spacing:0.2px">5,1155</div>
<div class="t" style="left:353px;top:833px;color:#000080">Εξαγ. Αποτέλ. No.</div><div class="t" style="left:452px;top:833px;color:#000080">48,</div><div class="t" style="left:478.5px;top:833px;color:#000080">Συντ.</div><div class="t" style="left:509px;top:833px;color:#000080;transform:scaleX(1.1);transform-origin:0 0">Φορτ.:</div><div class="t" style="left:545px;top:833px;color:#000080;letter-spacing:0.2px">5,0990</div>
<div class="t" style="left:353px;top:846px;color:#000080">Εξαγ. Αποτέλ. No.</div><div class="t" style="left:452px;top:846px;color:#000080">49,</div><div class="t" style="left:478.5px;top:846px;color:#000080">Συντ.</div><div class="t" style="left:509px;top:846px;color:#000080;transform:scaleX(1.1);transform-origin:0 0">Φορτ.:</div><div class="t" style="left:545px;top:846px;color:#000080;letter-spacing:0.2px">5,0828</div>
<div class="t" style="left:353px;top:859px;color:#000080">Εξαγ. Αποτέλ. No.</div><div class="t" style="left:452px;top:859px;color:#000080">50,</div><div class="t" style="left:478.5px;top:859px;color:#000080">Συντ.</div><div class="t" style="left:509px;top:859px;color:#000080;transform:scaleX(1.1);transform-origin:0 0">Φορτ.:</div><div class="t" style="left:545px;top:859px;color:#000080;letter-spacing:0.2px">5,0673</div>
<div class="a" style="left:352px;top:870px;width:289px;height:13px;background:#0078d7"></div>
<div class="t" style="left:353px;top:872px;color:#fff">Εξαγ. Αποτέλ. No.</div><div class="t" style="left:452px;top:872px;color:#fff">51,</div><div class="t" style="left:478.5px;top:872px;color:#fff">Συντ.</div><div class="t" style="left:509px;top:872px;color:#fff;transform:scaleX(1.1);transform-origin:0 0">Φορτ.:</div><div class="t" style="left:545px;top:872px;color:#fff;letter-spacing:0.2px">5,0523</div>
<svg class="a" style="left:0;top:0" width="1460" height="971" viewBox="0 0 1460 971"><polygon points="1126.9,538.4 1132.9,536.5 1124.5,534.8 1118.4,536.7" fill="#808080" stroke="#808080" stroke-width="0.4"/><polygon points="1129.5,529.6 1135.5,527.8 1127.0,526.2 1121.0,528.0" fill="#808080" stroke="#808080" stroke-width="0.4"/><polygon points="1123.3,547.5 1129.4,545.5 1121.0,543.8 1114.9,545.7" fill="#808080" stroke="#808080" stroke-width="0.4"/><polygon points="1130.7,521.2 1136.7,519.5 1128.3,517.9 1122.2,519.7" fill="#808080" stroke="#808080" stroke-width="0.4"/><polygon points="1119.0,556.8 1125.1,554.8 1116.7,553.0 1110.6,555.0" fill="#808080" stroke="#808080" stroke-width="0.4"/><polygon points="1132.9,536.5 1135.5,527.8 1129.5,529.6 1126.9,538.4" fill="#898989" stroke="#898989" stroke-width="0.4"/><polygon points="1129.4,545.5 1132.9,536.5 1126.9,538.4 1123.3,547.5" fill="#898989" stroke="#898989" stroke-width="0.4"/><polygon points="1135.5,527.8 1136.7,519.5 1130.7,521.2 1129.5,529.6" fill="#898989" stroke="#898989" stroke-width="0.4"/><polygon points="1126.9,538.4 1129.5,529.6 1121.0,528.0 1118.4,536.7" fill="#888888" stroke="#888888" stroke-width="0.4"/><polygon points="1114.3,566.4 1120.4,564.3 1112.0,562.4 1105.8,564.5" fill="#808080" stroke="#808080" stroke-width="0.4"/><polygon points="1125.1,554.8 1129.4,545.5 1123.3,547.5 1119.0,556.8" fill="#898989" stroke="#898989" stroke-width="0.4"/><polygon points="1123.3,547.5 1126.9,538.4 1118.4,536.7 1114.9,545.7" fill="#888888" stroke="#888888" stroke-width="0.4"/><polygon points="1129.5,529.6 1130.7,521.2 1122.2,519.7 1121.0,528.0" fill="#878787" stroke="#878787" stroke-width="0.4"/><polygon points="1119.0,556.8 1123.3,547.5 1114.9,545.7 1110.6,555.0" fill="#878787" stroke="#878787" stroke-width="0.4"/><polygon points="1120.4,564.3 1125.1,554.8 1119.0,556.8 1114.3,566.4" fill="#898989" stroke="#898989" stroke-width="0.4"/><polygon points="1109.3,576.1 1115.6,573.9 1107.2,571.9 1100.9,574.1" fill="#808080" stroke="#808080" stroke-width="0.4"/><polygon points="1114.3,566.4 1119.0,556.8 1110.6,555.0 1105.8,564.5" fill="#878787" stroke="#878787" stroke-width="0.4"/><polygon points="1094.0,615.6 1104.7,611.3 1090.8,607.6 1080.0,611.8" fill="#a9a9ad" stroke="#a9a9ad" stroke-width="0.4"/><polygon points="1104.5,585.8 1110.8,583.5 1102.4,581.5 1096.1,583.8" fill="#808080" stroke="#808080" stroke-width="0.4"/><polygon points="1135.9,519.5 1137.9,497.9 1132.5,499.3 1130.6,521.0" fill="#898989" stroke="#898989" stroke-width="0.4"/><polygon points="1115.6,573.9 1120.4,564.3 1114.3,566.4 1109.3,576.1" fill="#898989" stroke="#898989" stroke-width="0.4"/><polygon points="1103.8,626.2 1104.7,611.3 1094.0,615.6 1093.1,630.7" fill="#b5b5b9" stroke="#b5b5b9" stroke-width="0.4"/><polygon points="1096.6,604.8 1103.0,602.3 1094.6,600.1 1088.2,602.5" fill="#808080" stroke="#808080" stroke-width="0.4"/><polygon points="1132.5,499.3 1137.9,497.9 1130.3,496.7 1124.9,498.0" fill="#808080" stroke="#808080" stroke-width="0.4"/><polygon points="1100.2,595.4 1106.5,593.0 1098.1,590.9 1091.8,593.3" fill="#808080" stroke="#808080" stroke-width="0.4"/><polygon points="1130.6,521.0 1132.5,499.3 1124.9,498.0 1123.0,519.6" fill="#878787" stroke="#878787" stroke-width="0.4"/><polygon points="1109.3,576.1 1114.3,566.4 1105.8,564.5 1100.9,574.1" fill="#878787" stroke="#878787" stroke-width="0.4"/><polygon points="1110.8,583.5 1115.6,573.9 1109.3,576.1 1104.5,585.8" fill="#898989" stroke="#898989" stroke-width="0.4"/><polygon points="1093.1,630.7 1094.0,615.6 1080.0,611.8 1079.2,626.7" fill="#b2b2b6" stroke="#b2b2b6" stroke-width="0.4"/><polygon points="1100.4,611.1 1103.0,602.3 1096.6,604.8 1094.0,613.7" fill="#898989" stroke="#898989" stroke-width="0.4"/><polygon points="1104.5,585.8 1109.3,576.1 1100.9,574.1 1096.1,583.8" fill="#878787" stroke="#878787" stroke-width="0.4"/><polygon points="1106.5,593.0 1110.8,583.5 1104.5,585.8 1100.2,595.4" fill="#898989" stroke="#898989" stroke-width="0.4"/><polygon points="1103.0,602.3 1106.5,593.0 1100.2,595.4 1096.6,604.8" fill="#898989" stroke="#898989" stroke-width="0.4"/><polygon points="1094.0,613.7 1096.6,604.8 1088.2,602.5 1085.6,611.4" fill="#888888" stroke="#888888" stroke-width="0.4"/><polygon points="1100.2,595.4 1104.5,585.8 1096.1,583.8 1091.8,593.3" fill="#878787" stroke="#878787" stroke-width="0.4"/><polygon points="1096.6,604.8 1100.2,595.4 1091.8,593.3 1088.2,602.5" fill="#888888" stroke="#888888" stroke-width="0.4"/><polygon points="1135.1,477.2 1140.4,476.0 1132.8,474.9 1127.4,476.1" fill="#808080" stroke="#808080" stroke-width="0.4"/><polygon points="1137.9,497.9 1140.4,476.0 1135.1,477.2 1132.5,499.3" fill="#898989" stroke="#898989" stroke-width="0.4"/><polygon points="1165.2,519.3 1132.9,513.5 1126.7,515.3 1159.2,521.1" fill="#828282" stroke="#828282" stroke-width="0.4"/><polygon points="1132.5,499.3 1135.1,477.2 1127.4,476.1 1124.9,498.0" fill="#878787" stroke="#878787" stroke-width="0.4"/><polygon points="1117.1,520.0 1134.2,515.2 1125.5,513.6 1108.4,518.4" fill="#828282" stroke="#828282" stroke-width="0.4"/><polygon points="1116.5,530.6 1133.5,525.5 1134.2,515.2 1117.1,520.0" fill="#8a8a8a" stroke="#8a8a8a" stroke-width="0.4"/><polygon points="1159.2,521.1 1126.7,515.3 1126.1,525.6 1158.4,531.7" fill="#898989" stroke="#898989" stroke-width="0.4"/><polygon points="1137.7,454.9 1143.0,453.8 1135.3,452.8 1129.9,453.9" fill="#808080" stroke="#808080" stroke-width="0.4"/><polygon points="1140.4,476.0 1143.0,453.8 1137.7,454.9 1135.1,477.2" fill="#898989" stroke="#898989" stroke-width="0.4"/><polygon points="1135.1,477.2 1137.7,454.9 1129.9,453.9 1127.4,476.1" fill="#878787" stroke="#878787" stroke-width="0.4"/><polygon points="1139.7,432.5 1145.0,431.5 1137.3,430.7 1131.9,431.6" fill="#808080" stroke="#808080" stroke-width="0.4"/><polygon points="1158.4,531.7 1164.4,529.8 1165.2,519.3 1159.2,521.1" fill="#8a8a8a" stroke="#8a8a8a" stroke-width="0.4"/><polygon points="1143.0,453.8 1145.0,431.5 1139.7,432.5 1137.7,454.9" fill="#898989" stroke="#898989" stroke-width="0.4"/><polygon points="1137.7,454.9 1139.7,432.5 1131.9,431.6 1129.9,453.9" fill="#878787" stroke="#878787" stroke-width="0.4"/><polygon points="1117.1,520.0 1108.4,518.4 1107.7,528.9 1116.5,530.6" fill="#898989" stroke="#898989" stroke-width="0.4"/><polygon points="1175.1,429.1 1141.9,425.7 1135.7,426.7 1169.1,430.1" fill="#828282" stroke="#828282" stroke-width="0.4"/><polygon points="1199.3,525.3 1165.2,519.3 1159.2,521.1 1193.4,527.2" fill="#828282" stroke="#828282" stroke-width="0.4"/><polygon points="1126.1,429.5 1143.3,426.7 1134.4,425.7 1117.1,428.5" fill="#828282" stroke="#828282" stroke-width="0.4"/><polygon points="1193.4,527.2 1159.2,521.1 1158.4,531.7 1192.5,538.1" fill="#898989" stroke="#898989" stroke-width="0.4"/><polygon points="1125.4,440.5 1142.6,437.5 1143.3,426.7 1126.1,429.5" fill="#8a8a8a" stroke="#8a8a8a" stroke-width="0.4"/><polygon points="1169.1,430.1 1135.7,426.7 1135.0,437.5 1168.2,441.2" fill="#898989" stroke="#898989" stroke-width="0.4"/><polygon points="1099.3,525.1 1117.1,520.0 1108.4,518.4 1090.4,523.4" fill="#828282" stroke="#828282" stroke-width="0.4"/><polygon points="1098.6,535.9 1116.5,530.6 1117.1,520.0 1099.3,525.1" fill="#8a8a8a" stroke="#8a8a8a" stroke-width="0.4"/><polygon points="1192.5,538.1 1198.4,536.1 1199.3,525.3 1193.4,527.2" fill="#8a8a8a" stroke="#8a8a8a" stroke-width="0.4"/><polygon points="1168.2,441.2 1174.3,440.1 1175.1,429.1 1169.1,430.1" fill="#8a8a8a" stroke="#8a8a8a" stroke-width="0.4"/><polygon points="1126.1,429.5 1117.1,428.5 1116.4,439.5 1125.4,440.5" fill="#898989" stroke="#898989" stroke-width="0.4"/><polygon points="1099.3,525.1 1090.4,523.4 1089.8,534.2 1098.6,535.9" fill="#898989" stroke="#898989" stroke-width="0.4"/><polygon points="1235.4,531.7 1199.3,525.3 1193.4,527.2 1229.7,533.7" fill="#828282" stroke="#828282" stroke-width="0.4"/><polygon points="1210.3,432.6 1175.1,429.1 1169.1,430.1 1204.4,433.8" fill="#828282" stroke="#828282" stroke-width="0.4"/><polygon points="1229.7,533.7 1193.4,527.2 1192.5,538.1 1228.6,544.9" fill="#898989" stroke="#898989" stroke-width="0.4"/><polygon points="1230.0,558.9 1235.6,556.6 1225.6,554.7 1220.0,556.9" fill="#808080" stroke="#808080" stroke-width="0.4"/><polygon points="1232.7,549.3 1238.3,547.2 1228.3,545.3 1222.7,547.4" fill="#808080" stroke="#808080" stroke-width="0.4"/><polygon points="1204.4,433.8 1169.1,430.1 1168.2,441.2 1203.4,445.2" fill="#898989" stroke="#898989" stroke-width="0.4"/><polygon points="1226.3,568.8 1232.0,566.5 1222.0,564.5 1216.3,566.7" fill="#808080" stroke="#808080" stroke-width="0.4"/><polygon points="1108.1,432.4 1126.1,429.5 1117.1,428.5 1099.0,431.4" fill="#828282" stroke="#828282" stroke-width="0.4"/><polygon points="1228.6,544.9 1234.3,542.8 1235.4,531.7 1229.7,533.7" fill="#8a8a8a" stroke="#8a8a8a" stroke-width="0.4"/><polygon points="1234.3,540.2 1239.9,538.2 1229.8,536.3 1224.2,538.4" fill="#808080" stroke="#808080" stroke-width="0.4"/><polygon points="1235.6,556.6 1238.3,547.2 1232.7,549.3 1230.0,558.9" fill="#898989" stroke="#898989" stroke-width="0.4"/><polygon points="1221.9,579.1 1227.7,576.7 1217.7,574.5 1211.9,576.9" fill="#808080" stroke="#808080" stroke-width="0.4"/><polygon points="1232.0,566.5 1235.6,556.6 1230.0,558.9 1226.3,568.8" fill="#898989" stroke="#898989" stroke-width="0.4"/><polygon points="1080.5,530.5 1099.3,525.1 1090.4,523.4 1071.6,528.7" fill="#828282" stroke="#828282" stroke-width="0.4"/><polygon points="1107.4,443.8 1125.4,440.5 1126.1,429.5 1108.1,432.4" fill="#8a8a8a" stroke="#8a8a8a" stroke-width="0.4"/><polygon points="1238.3,547.2 1239.9,538.2 1234.3,540.2 1232.7,549.3" fill="#898989" stroke="#898989" stroke-width="0.4"/><polygon points="1227.7,576.7 1232.0,566.5 1226.3,568.8 1221.9,579.1" fill="#898989" stroke="#898989" stroke-width="0.4"/><polygon points="1079.9,541.5 1098.6,535.9 1099.3,525.1 1080.5,530.5" fill="#8a8a8a" stroke="#8a8a8a" stroke-width="0.4"/><polygon points="1230.0,558.9 1232.7,549.3 1222.7,547.4 1220.0,556.9" fill="#888888" stroke="#888888" stroke-width="0.4"/><polygon points="1217.2,589.6 1222.9,587.1 1213.0,584.9 1207.2,587.4" fill="#808080" stroke="#808080" stroke-width="0.4"/><polygon points="1226.3,568.8 1230.0,558.9 1220.0,556.9 1216.3,566.7" fill="#888888" stroke="#888888" stroke-width="0.4"/><polygon points="1203.4,445.2 1209.3,443.9 1210.3,432.6 1204.4,433.8" fill="#8a8a8a" stroke="#8a8a8a" stroke-width="0.4"/><polygon points="1232.7,549.3 1234.3,540.2 1224.2,538.4 1222.7,547.4" fill="#878787" stroke="#878787" stroke-width="0.4"/><polygon points="1222.9,587.1 1227.7,576.7 1221.9,579.1 1217.2,589.6" fill="#898989" stroke="#898989" stroke-width="0.4"/><polygon points="1221.9,579.1 1226.3,568.8 1216.3,566.7 1211.9,576.9" fill="#878787" stroke="#878787" stroke-width="0.4"/><polygon points="1212.2,600.3 1218.0,597.6 1208.1,595.3 1202.2,597.9" fill="#808080" stroke="#808080" stroke-width="0.4"/><polygon points="1217.2,589.6 1221.9,579.1 1211.9,576.9 1207.2,587.4" fill="#878787" stroke="#878787" stroke-width="0.4"/><polygon points="1218.0,597.6 1222.9,587.1 1217.2,589.6 1212.2,600.3" fill="#898989" stroke="#898989" stroke-width="0.4"/><polygon points="1239.0,538.2 1241.7,514.8 1236.7,516.5 1234.0,540.0" fill="#898989" stroke="#898989" stroke-width="0.4"/><polygon points="1205.7,654.7 1207.2,638.6 1197.1,643.7 1195.6,660.0" fill="#b5b5b9" stroke="#b5b5b9" stroke-width="0.4"/><polygon points="1197.1,643.7 1207.2,638.6 1190.7,634.2 1180.5,639.2" fill="#a9a9ad" stroke="#a9a9ad" stroke-width="0.4"/><polygon points="1207.3,610.9 1213.3,608.2 1203.3,605.8 1197.3,608.5" fill="#808080" stroke="#808080" stroke-width="0.4"/><polygon points="1199.2,631.7 1205.2,628.7 1195.2,626.2 1189.2,629.1" fill="#808080" stroke="#808080" stroke-width="0.4"/><polygon points="1236.7,516.5 1241.7,514.8 1232.7,513.3 1227.7,515.0" fill="#808080" stroke="#808080" stroke-width="0.4"/><polygon points="1202.9,621.4 1208.9,618.6 1198.9,616.1 1192.9,618.9" fill="#808080" stroke="#808080" stroke-width="0.4"/><polygon points="1234.0,540.0 1236.7,516.5 1227.7,515.0 1225.1,538.4" fill="#878787" stroke="#878787" stroke-width="0.4"/><polygon points="1212.2,600.3 1217.2,589.6 1207.2,587.4 1202.2,597.9" fill="#878787" stroke="#878787" stroke-width="0.4"/><polygon points="1213.3,608.2 1218.0,597.6 1212.2,600.3 1207.3,610.9" fill="#898989" stroke="#898989" stroke-width="0.4"/><polygon points="1202.5,638.4 1205.2,628.7 1199.2,631.7 1196.4,641.4" fill="#898989" stroke="#898989" stroke-width="0.4"/><polygon points="1195.6,660.0 1197.1,643.7 1180.5,639.2 1179.1,655.3" fill="#b2b2b6" stroke="#b2b2b6" stroke-width="0.4"/><polygon points="1208.9,618.6 1213.3,608.2 1207.3,610.9 1202.9,621.4" fill="#898989" stroke="#898989" stroke-width="0.4"/><polygon points="1108.1,432.4 1099.0,431.4 1098.3,442.7 1107.4,443.8" fill="#898989" stroke="#898989" stroke-width="0.4"/><polygon points="1205.2,628.7 1208.9,618.6 1202.9,621.4 1199.2,631.7" fill="#898989" stroke="#898989" stroke-width="0.4"/><polygon points="1207.3,610.9 1212.2,600.3 1202.2,597.9 1197.3,608.5" fill="#878787" stroke="#878787" stroke-width="0.4"/><polygon points="1080.5,530.5 1071.6,528.7 1071.0,539.7 1079.9,541.5" fill="#898989" stroke="#898989" stroke-width="0.4"/><polygon points="1196.4,641.4 1199.2,631.7 1189.2,629.1 1186.5,638.7" fill="#888888" stroke="#888888" stroke-width="0.4"/><polygon points="1202.9,621.4 1207.3,610.9 1197.3,608.5 1192.9,618.9" fill="#878787" stroke="#878787" stroke-width="0.4"/><polygon points="1199.2,631.7 1202.9,621.4 1192.9,618.9 1189.2,629.1" fill="#888888" stroke="#888888" stroke-width="0.4"/><polygon points="1241.7,514.8 1245.0,491.0 1240.0,492.5 1236.7,516.5" fill="#898989" stroke="#898989" stroke-width="0.4"/><polygon points="1240.0,492.5 1245.0,491.0 1236.0,489.7 1231.0,491.2" fill="#808080" stroke="#808080" stroke-width="0.4"/><polygon points="1247.5,436.4 1210.3,432.6 1204.4,433.8 1241.8,437.6" fill="#828282" stroke="#828282" stroke-width="0.4"/><polygon points="1236.7,516.5 1240.0,492.5 1231.0,491.2 1227.7,515.0" fill="#878787" stroke="#878787" stroke-width="0.4"/><polygon points="1221.8,539.4 1237.7,533.6 1227.5,531.8 1211.4,537.5" fill="#828282" stroke="#828282" stroke-width="0.4"/><polygon points="1220.7,550.8 1236.6,544.8 1237.7,533.6 1221.8,539.4" fill="#8a8a8a" stroke="#8a8a8a" stroke-width="0.4"/><polygon points="1245.0,491.0 1248.3,467.0 1243.4,468.3 1240.0,492.5" fill="#898989" stroke="#898989" stroke-width="0.4"/><polygon points="1243.4,468.3 1248.3,467.0 1239.2,465.8 1234.2,467.1" fill="#808080" stroke="#808080" stroke-width="0.4"/><polygon points="1241.8,437.6 1204.4,433.8 1203.4,445.2 1240.6,449.3" fill="#898989" stroke="#898989" stroke-width="0.4"/><polygon points="1240.0,492.5 1243.4,468.3 1234.2,467.1 1231.0,491.2" fill="#878787" stroke="#878787" stroke-width="0.4"/><polygon points="1163.1,560.0 1232.4,534.9 1129.7,516.5 1056.2,537.4" fill="#9a9aa0" fill-opacity="0.68"/><polygon points="1248.3,467.0 1251.2,442.8 1246.2,443.9 1243.4,468.3" fill="#898989" stroke="#898989" stroke-width="0.4"/><polygon points="1246.2,443.9 1251.2,442.8 1242.0,441.8 1237.0,442.9" fill="#808080" stroke="#808080" stroke-width="0.4"/><polygon points="1240.6,449.3 1246.4,448.0 1247.5,436.4 1241.8,437.6" fill="#8a8a8a" stroke="#8a8a8a" stroke-width="0.4"/><polygon points="1089.1,435.5 1108.1,432.4 1099.0,431.4 1079.9,434.5" fill="#828282" stroke="#828282" stroke-width="0.4"/><polygon points="1060.8,536.1 1080.5,530.5 1071.6,528.7 1051.8,534.2" fill="#828282" stroke="#828282" stroke-width="0.4"/><polygon points="1243.4,468.3 1246.2,443.9 1237.0,442.9 1234.2,467.1" fill="#878787" stroke="#878787" stroke-width="0.4"/><polygon points="1060.2,547.4 1079.9,541.5 1080.5,530.5 1060.8,536.1" fill="#8a8a8a" stroke="#8a8a8a" stroke-width="0.4"/><polygon points="1088.5,447.1 1107.4,443.8 1108.1,432.4 1089.1,435.5" fill="#8a8a8a" stroke="#8a8a8a" stroke-width="0.4"/><polygon points="1221.8,539.4 1211.4,537.5 1210.4,548.8 1220.7,550.8" fill="#898989" stroke="#898989" stroke-width="0.4"/><polygon points="1052.6,561.7 1059.9,559.4 1051.2,557.4 1043.8,559.6" fill="#808080" stroke="#808080" stroke-width="0.4"/><polygon points="1048.5,571.8 1055.8,569.4 1047.2,567.3 1039.8,569.6" fill="#808080" stroke="#808080" stroke-width="0.4"/><polygon points="1055.4,552.0 1062.7,549.8 1054.0,547.9 1046.7,550.0" fill="#808080" stroke="#808080" stroke-width="0.4"/><polygon points="1043.5,582.2 1050.9,579.7 1042.3,577.5 1034.8,580.0" fill="#808080" stroke="#808080" stroke-width="0.4"/><polygon points="1014.0,647.7 1027.1,642.5 1012.8,638.0 999.7,643.1" fill="#a9a9ad" stroke="#a9a9ad" stroke-width="0.4"/><polygon points="1038.0,592.8 1045.5,590.2 1036.8,588.0 1029.3,590.5" fill="#808080" stroke="#808080" stroke-width="0.4"/><polygon points="1026.4,658.8 1027.1,642.5 1014.0,647.7 1013.5,664.3" fill="#b5b5b9" stroke="#b5b5b9" stroke-width="0.4"/><polygon points="1055.8,569.4 1059.9,559.4 1052.6,561.7 1048.5,571.8" fill="#898989" stroke="#898989" stroke-width="0.4"/><polygon points="1056.7,542.8 1064.0,540.7 1055.3,538.8 1048.0,540.9" fill="#808080" stroke="#808080" stroke-width="0.4"/><polygon points="1060.8,536.1 1051.8,534.2 1051.3,545.4 1060.2,547.4" fill="#898989" stroke="#898989" stroke-width="0.4"/><polygon points="1059.9,559.4 1062.7,549.8 1055.4,552.0 1052.6,561.7" fill="#898989" stroke="#898989" stroke-width="0.4"/><polygon points="1032.2,603.6 1039.8,600.9 1031.2,598.6 1023.6,601.2" fill="#808080" stroke="#808080" stroke-width="0.4"/><polygon points="1017.4,635.5 1025.2,632.5 1016.6,629.8 1008.8,632.8" fill="#808080" stroke="#808080" stroke-width="0.4"/><polygon points="1013.5,664.3 1014.0,647.7 999.7,643.1 999.2,659.4" fill="#b2b2b6" stroke="#b2b2b6" stroke-width="0.4"/><polygon points="1050.9,579.7 1055.8,569.4 1048.5,571.8 1043.5,582.2" fill="#898989" stroke="#898989" stroke-width="0.4"/><polygon points="1048.5,571.8 1052.6,561.7 1043.8,559.6 1039.8,569.6" fill="#888888" stroke="#888888" stroke-width="0.4"/><polygon points="1089.1,435.5 1079.9,434.5 1079.4,446.0 1088.5,447.1" fill="#898989" stroke="#898989" stroke-width="0.4"/><polygon points="1052.6,561.7 1055.4,552.0 1046.7,550.0 1043.8,559.6" fill="#888888" stroke="#888888" stroke-width="0.4"/><polygon points="1043.5,582.2 1048.5,571.8 1039.8,569.6 1034.8,580.0" fill="#878787" stroke="#878787" stroke-width="0.4"/><polygon points="1026.7,614.4 1034.3,611.6 1025.7,609.2 1018.0,611.9" fill="#808080" stroke="#808080" stroke-width="0.4"/><polygon points="1021.6,625.1 1029.3,622.2 1020.7,619.6 1012.9,622.5" fill="#808080" stroke="#808080" stroke-width="0.4"/><polygon points="1045.5,590.2 1050.9,579.7 1043.5,582.2 1038.0,592.8" fill="#898989" stroke="#898989" stroke-width="0.4"/><polygon points="1062.7,549.8 1064.0,540.7 1056.7,542.8 1055.4,552.0" fill="#898989" stroke="#898989" stroke-width="0.4"/><polygon points="1038.0,592.8 1043.5,582.2 1034.8,580.0 1029.3,590.5" fill="#878787" stroke="#878787" stroke-width="0.4"/><polygon points="1022.4,642.3 1025.2,632.5 1017.4,635.5 1014.6,645.4" fill="#898989" stroke="#898989" stroke-width="0.4"/><polygon points="1055.4,552.0 1056.7,542.8 1048.0,540.9 1046.7,550.0" fill="#878787" stroke="#878787" stroke-width="0.4"/><polygon points="1014.6,645.4 1017.4,635.5 1008.8,632.8 1006.0,642.6" fill="#888888" stroke="#888888" stroke-width="0.4"/><polygon points="1039.8,600.9 1045.5,590.2 1038.0,592.8 1032.2,603.6" fill="#898989" stroke="#898989" stroke-width="0.4"/><polygon points="1032.2,603.6 1038.0,592.8 1029.3,590.5 1023.6,601.2" fill="#878787" stroke="#878787" stroke-width="0.4"/><polygon points="1034.3,611.6 1039.8,600.9 1032.2,603.6 1026.7,614.4" fill="#898989" stroke="#898989" stroke-width="0.4"/><polygon points="1234.0,440.9 1250.0,437.5 1239.4,436.5 1223.3,439.8" fill="#828282" stroke="#828282" stroke-width="0.4"/><polygon points="1025.2,632.5 1029.3,622.2 1021.6,625.1 1017.4,635.5" fill="#898989" stroke="#898989" stroke-width="0.4"/><polygon points="1029.3,622.2 1034.3,611.6 1026.7,614.4 1021.6,625.1" fill="#898989" stroke="#898989" stroke-width="0.4"/><polygon points="1026.7,614.4 1032.2,603.6 1023.6,601.2 1018.0,611.9" fill="#878787" stroke="#878787" stroke-width="0.4"/><polygon points="1017.4,635.5 1021.6,625.1 1012.9,622.5 1008.8,632.8" fill="#888888" stroke="#888888" stroke-width="0.4"/><polygon points="1021.6,625.1 1026.7,614.4 1018.0,611.9 1012.9,622.5" fill="#878787" stroke="#878787" stroke-width="0.4"/><polygon points="1232.9,452.9 1248.8,449.3 1250.0,437.5 1234.0,440.9" fill="#8a8a8a" stroke="#8a8a8a" stroke-width="0.4"/><polygon points="1063.1,540.7 1064.8,517.0 1058.4,518.7 1056.7,542.6" fill="#898989" stroke="#898989" stroke-width="0.4"/><polygon points="1205.0,545.5 1221.8,539.4 1211.4,537.5 1194.5,543.4" fill="#828282" stroke="#828282" stroke-width="0.4"/><polygon points="1056.7,542.6 1058.4,518.7 1050.5,517.2 1048.9,540.9" fill="#878787" stroke="#878787" stroke-width="0.4"/><polygon points="1058.4,518.7 1064.8,517.0 1057.0,515.5 1050.5,517.2" fill="#808080" stroke="#808080" stroke-width="0.4"/><polygon points="1204.0,557.2 1220.7,550.8 1221.8,539.4 1205.0,545.5" fill="#8a8a8a" stroke="#8a8a8a" stroke-width="0.4"/><polygon points="1174.8,454.1 1244.4,439.3 1138.7,428.4 1064.4,440.6" fill="#9a9aa0" fill-opacity="0.68"/><polygon points="1040.0,542.0 1060.8,536.1 1051.8,534.2 1031.0,540.0" fill="#828282" stroke="#828282" stroke-width="0.4"/><polygon points="1069.2,438.8 1089.1,435.5 1079.9,434.5 1059.9,437.7" fill="#828282" stroke="#828282" stroke-width="0.4"/><polygon points="1064.8,517.0 1067.3,492.9 1060.8,494.5 1058.4,518.7" fill="#898989" stroke="#898989" stroke-width="0.4"/><polygon points="1060.8,494.5 1067.3,492.9 1059.4,491.6 1052.9,493.1" fill="#808080" stroke="#808080" stroke-width="0.4"/><polygon points="1093.4,541.0 1060.0,534.1 1052.5,536.2 1086.1,543.3" fill="#828282" stroke="#828282" stroke-width="0.4"/><polygon points="1039.5,553.6 1060.2,547.4 1060.8,536.1 1040.0,542.0" fill="#8a8a8a" stroke="#8a8a8a" stroke-width="0.4"/><polygon points="1058.4,518.7 1060.8,494.5 1052.9,493.1 1050.5,517.2" fill="#878787" stroke="#878787" stroke-width="0.4"/><polygon points="1068.6,450.7 1088.5,447.1 1089.1,435.5 1069.2,438.8" fill="#8a8a8a" stroke="#8a8a8a" stroke-width="0.4"/><polygon points="1234.0,440.9 1223.3,439.8 1222.2,451.7 1232.9,452.9" fill="#898989" stroke="#898989" stroke-width="0.4"/><polygon points="1086.1,543.3 1052.5,536.2 1052.0,547.5 1085.4,554.9" fill="#898989" stroke="#898989" stroke-width="0.4"/><polygon points="1205.0,545.5 1194.5,543.4 1193.5,555.1 1204.0,557.2" fill="#898989" stroke="#898989" stroke-width="0.4"/><polygon points="1063.2,469.9 1069.7,468.6 1061.8,467.4 1055.3,468.7" fill="#808080" stroke="#808080" stroke-width="0.4"/><polygon points="1067.3,492.9 1069.7,468.6 1063.2,469.9 1060.8,494.5" fill="#898989" stroke="#898989" stroke-width="0.4"/><polygon points="1060.8,494.5 1063.2,469.9 1055.3,468.7 1052.9,493.1" fill="#878787" stroke="#878787" stroke-width="0.4"/><polygon points="1040.0,542.0 1031.0,540.0 1030.5,551.5 1039.5,553.6" fill="#898989" stroke="#898989" stroke-width="0.4"/><polygon points="1085.4,554.9 1092.8,552.6 1093.4,541.0 1086.1,543.3" fill="#8a8a8a" stroke="#8a8a8a" stroke-width="0.4"/><polygon points="1065.0,445.2 1071.5,444.1 1063.5,443.1 1057.0,444.2" fill="#808080" stroke="#808080" stroke-width="0.4"/><polygon points="1069.2,438.8 1059.9,437.7 1059.4,449.5 1068.6,450.7" fill="#898989" stroke="#898989" stroke-width="0.4"/><polygon points="1069.7,468.6 1071.5,444.1 1065.0,445.2 1063.2,469.9" fill="#898989" stroke="#898989" stroke-width="0.4"/><polygon points="1063.2,469.9 1065.0,445.2 1057.0,444.2 1055.3,468.7" fill="#878787" stroke="#878787" stroke-width="0.4"/><polygon points="1217.2,444.5 1234.0,440.9 1223.3,439.8 1206.3,443.3" fill="#828282" stroke="#828282" stroke-width="0.4"/><polygon points="1216.1,456.8 1232.9,452.9 1234.0,440.9 1217.2,444.5" fill="#8a8a8a" stroke="#8a8a8a" stroke-width="0.4"/><polygon points="1187.4,551.9 1205.0,545.5 1194.5,543.4 1176.7,549.7" fill="#828282" stroke="#828282" stroke-width="0.4"/><polygon points="1186.4,563.9 1204.0,557.2 1205.0,545.5 1187.4,551.9" fill="#8a8a8a" stroke="#8a8a8a" stroke-width="0.4"/><polygon points="1018.1,548.2 1040.0,542.0 1031.0,540.0 1009.0,546.1" fill="#828282" stroke="#828282" stroke-width="0.4"/><polygon points="1017.7,560.1 1039.5,553.6 1040.0,542.0 1018.1,548.2" fill="#8a8a8a" stroke="#8a8a8a" stroke-width="0.4"/><polygon points="1048.2,442.2 1069.2,438.8 1059.9,437.7 1038.9,441.1" fill="#828282" stroke="#828282" stroke-width="0.4"/><polygon points="1129.0,548.4 1093.4,541.0 1086.1,543.3 1121.7,550.8" fill="#828282" stroke="#828282" stroke-width="0.4"/><polygon points="1102.8,441.7 1068.3,437.6 1060.7,438.9 1095.3,443.0" fill="#828282" stroke="#828282" stroke-width="0.4"/><polygon points="1047.6,454.4 1068.6,450.7 1069.2,438.8 1048.2,442.2" fill="#8a8a8a" stroke="#8a8a8a" stroke-width="0.4"/><polygon points="1121.7,550.8 1086.1,543.3 1085.4,554.9 1120.9,562.8" fill="#898989" stroke="#898989" stroke-width="0.4"/><polygon points="1095.3,443.0 1060.7,438.9 1060.2,450.8 1094.6,455.3" fill="#898989" stroke="#898989" stroke-width="0.4"/><polygon points="1217.2,444.5 1206.3,443.3 1205.2,455.5 1216.1,456.8" fill="#898989" stroke="#898989" stroke-width="0.4"/><polygon points="1187.4,551.9 1176.7,549.7 1175.7,561.7 1186.4,563.9" fill="#898989" stroke="#898989" stroke-width="0.4"/><polygon points="1018.1,548.2 1009.0,546.1 1008.7,557.9 1017.7,560.1" fill="#898989" stroke="#898989" stroke-width="0.4"/><polygon points="1120.9,562.8 1128.2,560.3 1129.0,548.4 1121.7,550.8" fill="#8a8a8a" stroke="#8a8a8a" stroke-width="0.4"/><polygon points="1048.2,442.2 1038.9,441.1 1038.4,453.2 1047.6,454.4" fill="#898989" stroke="#898989" stroke-width="0.4"/><polygon points="1094.6,455.3 1102.1,453.9 1102.8,441.7 1095.3,443.0" fill="#8a8a8a" stroke="#8a8a8a" stroke-width="0.4"/><polygon points="1199.4,448.2 1217.2,444.5 1206.3,443.3 1188.4,446.9" fill="#828282" stroke="#828282" stroke-width="0.4"/><polygon points="995.0,554.8 1018.1,548.2 1009.0,546.1 985.9,552.6" fill="#828282" stroke="#828282" stroke-width="0.4"/><polygon points="1168.7,558.6 1187.4,551.9 1176.7,549.7 1157.9,556.4" fill="#828282" stroke="#828282" stroke-width="0.4"/><polygon points="1167.7,571.0 1186.4,563.9 1187.4,551.9 1168.7,558.6" fill="#8a8a8a" stroke="#8a8a8a" stroke-width="0.4"/><polygon points="1198.3,460.9 1216.1,456.8 1217.2,444.5 1199.4,448.2" fill="#8a8a8a" stroke="#8a8a8a" stroke-width="0.4"/><polygon points="994.7,567.0 1017.7,560.1 1018.1,548.2 995.0,554.8" fill="#8a8a8a" stroke="#8a8a8a" stroke-width="0.4"/><polygon points="1166.8,556.2 1129.0,548.4 1121.7,550.8 1159.7,558.8" fill="#828282" stroke="#828282" stroke-width="0.4"/><polygon points="1026.0,445.9 1048.2,442.2 1038.9,441.1 1016.6,444.6" fill="#828282" stroke="#828282" stroke-width="0.4"/><polygon points="1159.7,558.8 1121.7,550.8 1120.9,562.8 1158.8,571.1" fill="#898989" stroke="#898989" stroke-width="0.4"/><polygon points="1139.5,446.1 1102.8,441.7 1095.3,443.0 1132.2,447.5" fill="#828282" stroke="#828282" stroke-width="0.4"/><polygon points="1025.5,458.4 1047.6,454.4 1048.2,442.2 1026.0,445.9" fill="#8a8a8a" stroke="#8a8a8a" stroke-width="0.4"/><polygon points="1159.9,586.8 1166.9,584.0 1156.4,581.6 1149.4,584.3" fill="#808080" stroke="#808080" stroke-width="0.4"/><polygon points="1155.7,597.9 1162.7,595.0 1152.2,592.5 1145.2,595.3" fill="#808080" stroke="#808080" stroke-width="0.4"/><polygon points="1163.0,576.1 1169.9,573.5 1159.4,571.2 1152.5,573.8" fill="#808080" stroke="#808080" stroke-width="0.4"/><polygon points="1150.6,609.4 1157.7,606.4 1147.2,603.8 1140.1,606.8" fill="#808080" stroke="#808080" stroke-width="0.4"/><polygon points="1132.2,447.5 1095.3,443.0 1094.6,455.3 1131.3,460.1" fill="#898989" stroke="#898989" stroke-width="0.4"/><polygon points="995.0,554.8 985.9,552.6 985.6,564.7 994.7,567.0" fill="#898989" stroke="#898989" stroke-width="0.4"/><polygon points="1132.2,693.7 1133.5,676.0 1121.0,682.3 1119.8,700.3" fill="#b5b5b9" stroke="#b5b5b9" stroke-width="0.4"/><polygon points="1121.0,682.3 1133.5,676.0 1116.2,670.5 1103.6,676.7" fill="#a9a9ad" stroke="#a9a9ad" stroke-width="0.4"/><polygon points="1145.0,621.3 1152.1,618.1 1141.7,615.4 1134.5,618.5" fill="#808080" stroke="#808080" stroke-width="0.4"/><polygon points="1162.7,595.0 1166.9,584.0 1159.9,586.8 1155.7,597.9" fill="#898989" stroke="#898989" stroke-width="0.4"/><polygon points="1166.9,584.0 1169.9,573.5 1163.0,576.1 1159.9,586.8" fill="#898989" stroke="#898989" stroke-width="0.4"/><polygon points="1157.7,606.4 1162.7,595.0 1155.7,597.9 1150.6,609.4" fill="#898989" stroke="#898989" stroke-width="0.4"/><polygon points="1164.6,566.1 1171.5,563.5 1161.0,561.3 1154.1,563.8" fill="#808080" stroke="#808080" stroke-width="0.4"/><polygon points="1168.7,558.6 1157.9,556.4 1157.0,568.6 1167.7,571.0" fill="#898989" stroke="#898989" stroke-width="0.4"/><polygon points="1158.8,571.1 1165.8,568.5 1166.8,556.2 1159.7,558.8" fill="#8a8a8a" stroke="#8a8a8a" stroke-width="0.4"/><polygon points="1139.1,633.2 1146.4,630.0 1135.9,627.1 1128.6,630.3" fill="#808080" stroke="#808080" stroke-width="0.4"/><polygon points="1123.9,668.6 1131.4,664.9 1121.0,661.8 1113.4,665.4" fill="#808080" stroke="#808080" stroke-width="0.4"/><polygon points="1119.8,700.3 1121.0,682.3 1103.6,676.7 1102.5,694.5" fill="#b2b2b6" stroke="#b2b2b6" stroke-width="0.4"/><polygon points="1155.7,597.9 1159.9,586.8 1149.4,584.3 1145.2,595.3" fill="#888888" stroke="#888888" stroke-width="0.4"/><polygon points="1199.4,448.2 1188.4,446.9 1187.4,459.5 1198.3,460.9" fill="#898989" stroke="#898989" stroke-width="0.4"/><polygon points="1152.1,618.1 1157.7,606.4 1150.6,609.4 1145.0,621.3" fill="#898989" stroke="#898989" stroke-width="0.4"/><polygon points="1159.9,586.8 1163.0,576.1 1152.5,573.8 1149.4,584.3" fill="#888888" stroke="#888888" stroke-width="0.4"/><polygon points="1150.6,609.4 1155.7,597.9 1145.2,595.3 1140.1,606.8" fill="#878787" stroke="#878787" stroke-width="0.4"/><polygon points="1133.4,645.3 1140.8,641.9 1130.3,638.9 1123.0,642.2" fill="#808080" stroke="#808080" stroke-width="0.4"/><polygon points="1169.9,573.5 1171.5,563.5 1164.6,566.1 1163.0,576.1" fill="#898989" stroke="#898989" stroke-width="0.4"/><polygon points="1128.2,657.1 1135.6,653.6 1125.2,650.5 1117.8,654.0" fill="#808080" stroke="#808080" stroke-width="0.4"/><polygon points="1128.3,675.7 1131.4,664.9 1123.9,668.6 1120.8,679.5" fill="#898989" stroke="#898989" stroke-width="0.4"/><polygon points="1146.4,630.0 1152.1,618.1 1145.0,621.3 1139.1,633.2" fill="#898989" stroke="#898989" stroke-width="0.4"/><polygon points="1145.0,621.3 1150.6,609.4 1140.1,606.8 1134.5,618.5" fill="#878787" stroke="#878787" stroke-width="0.4"/><polygon points="1026.0,445.9 1016.6,444.6 1016.2,457.1 1025.5,458.4" fill="#898989" stroke="#898989" stroke-width="0.4"/><polygon points="1163.0,576.1 1164.6,566.1 1154.1,563.8 1152.5,573.8" fill="#878787" stroke="#878787" stroke-width="0.4"/><polygon points="1120.8,679.5 1123.9,668.6 1113.4,665.4 1110.4,676.2" fill="#888888" stroke="#888888" stroke-width="0.4"/><polygon points="1140.8,641.9 1146.4,630.0 1139.1,633.2 1133.4,645.3" fill="#898989" stroke="#898989" stroke-width="0.4"/><polygon points="1131.4,664.9 1135.6,653.6 1128.2,657.1 1123.9,668.6" fill="#898989" stroke="#898989" stroke-width="0.4"/><polygon points="1139.1,633.2 1145.0,621.3 1134.5,618.5 1128.6,630.3" fill="#878787" stroke="#878787" stroke-width="0.4"/><polygon points="1135.6,653.6 1140.8,641.9 1133.4,645.3 1128.2,657.1" fill="#898989" stroke="#898989" stroke-width="0.4"/><polygon points="1131.3,460.1 1138.6,458.6 1139.5,446.1 1132.2,447.5" fill="#8a8a8a" stroke="#8a8a8a" stroke-width="0.4"/><polygon points="1133.4,645.3 1139.1,633.2 1128.6,630.3 1123.0,642.2" fill="#878787" stroke="#878787" stroke-width="0.4"/><polygon points="1123.9,668.6 1128.2,657.1 1117.8,654.0 1113.4,665.4" fill="#888888" stroke="#888888" stroke-width="0.4"/><polygon points="1128.2,657.1 1133.4,645.3 1123.0,642.2 1117.8,654.0" fill="#878787" stroke="#878787" stroke-width="0.4"/><polygon points="1170.6,563.5 1173.2,537.7 1167.0,539.8 1164.4,565.8" fill="#898989" stroke="#898989" stroke-width="0.4"/><polygon points="1164.4,565.8 1167.0,539.8 1157.5,537.9 1155.0,563.8" fill="#878787" stroke="#878787" stroke-width="0.4"/><polygon points="1167.0,539.8 1173.2,537.7 1163.7,535.9 1157.5,537.9" fill="#808080" stroke="#808080" stroke-width="0.4"/><polygon points="915.3,687.4 931.6,680.8 917.0,675.3 900.8,681.6" fill="#a9a9ad" stroke="#a9a9ad" stroke-width="0.4"/><polygon points="915.2,705.6 915.3,687.4 900.8,681.6 900.7,699.6" fill="#b2b2b6" stroke="#b2b2b6" stroke-width="0.4"/><polygon points="931.4,698.8 931.6,680.8 915.3,687.4 915.2,705.6" fill="#b5b5b9" stroke="#b5b5b9" stroke-width="0.4"/><polygon points="970.7,561.7 995.0,554.8 985.9,552.6 961.5,559.4" fill="#828282" stroke="#828282" stroke-width="0.4"/><polygon points="919.9,673.4 929.6,669.6 920.9,666.4 911.2,670.1" fill="#808080" stroke="#808080" stroke-width="0.4"/><polygon points="970.4,574.2 994.7,567.0 995.0,554.8 970.7,561.7" fill="#8a8a8a" stroke="#8a8a8a" stroke-width="0.4"/><polygon points="916.7,684.5 919.9,673.4 911.2,670.1 908.0,681.0" fill="#888888" stroke="#888888" stroke-width="0.4"/><polygon points="924.7,661.7 934.4,658.1 925.6,654.9 916.0,658.5" fill="#808080" stroke="#808080" stroke-width="0.4"/><polygon points="926.4,680.6 929.6,669.6 919.9,673.4 916.7,684.5" fill="#898989" stroke="#898989" stroke-width="0.4"/><polygon points="956.6,601.6 965.7,598.6 956.8,596.0 947.7,599.0" fill="#808080" stroke="#808080" stroke-width="0.4"/><polygon points="950.7,613.3 959.9,610.2 951.1,607.5 941.9,610.5" fill="#808080" stroke="#808080" stroke-width="0.4"/><polygon points="944.2,625.3 953.5,622.1 944.7,619.3 935.3,622.4" fill="#808080" stroke="#808080" stroke-width="0.4"/><polygon points="930.7,649.7 940.3,646.2 931.5,643.2 921.9,646.6" fill="#808080" stroke="#808080" stroke-width="0.4"/><polygon points="961.3,590.3 970.4,587.5 961.5,585.0 952.4,587.8" fill="#808080" stroke="#808080" stroke-width="0.4"/><polygon points="937.4,637.5 946.8,634.1 938.0,631.2 928.5,634.5" fill="#808080" stroke="#808080" stroke-width="0.4"/><polygon points="1173.2,537.7 1176.4,511.4 1170.3,513.2 1167.0,539.8" fill="#898989" stroke="#898989" stroke-width="0.4"/><polygon points="1149.0,565.8 1168.7,558.6 1157.9,556.4 1138.0,563.4" fill="#828282" stroke="#828282" stroke-width="0.4"/><polygon points="1148.0,578.4 1167.7,571.0 1168.7,558.6 1149.0,565.8" fill="#8a8a8a" stroke="#8a8a8a" stroke-width="0.4"/><polygon points="1180.6,452.2 1199.4,448.2 1188.4,446.9 1169.5,450.8" fill="#828282" stroke="#828282" stroke-width="0.4"/><polygon points="1076.5,591.2 1163.1,560.0 1056.2,537.4 966.0,563.1" fill="#9a9aa0" fill-opacity="0.68"/><polygon points="1002.6,449.7 1026.0,445.9 1016.6,444.6 993.1,448.4" fill="#828282" stroke="#828282" stroke-width="0.4"/><polygon points="1170.3,513.2 1176.4,511.4 1166.9,509.8 1160.7,511.6" fill="#808080" stroke="#808080" stroke-width="0.4"/><polygon points="919.9,673.4 924.7,661.7 916.0,658.5 911.2,670.1" fill="#888888" stroke="#888888" stroke-width="0.4"/><polygon points="964.6,579.5 973.6,576.8 964.7,574.4 955.7,577.1" fill="#808080" stroke="#808080" stroke-width="0.4"/><polygon points="929.6,669.6 934.4,658.1 924.7,661.7 919.9,673.4" fill="#898989" stroke="#898989" stroke-width="0.4"/><polygon points="1167.0,539.8 1170.3,513.2 1160.7,511.6 1157.5,537.9" fill="#878787" stroke="#878787" stroke-width="0.4"/><polygon points="1179.6,465.2 1198.3,460.9 1199.4,448.2 1180.6,452.2" fill="#8a8a8a" stroke="#8a8a8a" stroke-width="0.4"/><polygon points="924.7,661.7 930.7,649.7 921.9,646.6 916.0,658.5" fill="#878787" stroke="#878787" stroke-width="0.4"/><polygon points="950.7,613.3 956.6,601.6 947.7,599.0 941.9,610.5" fill="#878787" stroke="#878787" stroke-width="0.4"/><polygon points="1178.6,450.7 1139.5,446.1 1132.2,447.5 1171.4,452.2" fill="#828282" stroke="#828282" stroke-width="0.4"/><polygon points="959.9,610.2 965.7,598.6 956.6,601.6 950.7,613.3" fill="#898989" stroke="#898989" stroke-width="0.4"/><polygon points="934.4,658.1 940.3,646.2 930.7,649.7 924.7,661.7" fill="#898989" stroke="#898989" stroke-width="0.4"/><polygon points="944.2,625.3 950.7,613.3 941.9,610.5 935.3,622.4" fill="#878787" stroke="#878787" stroke-width="0.4"/><polygon points="953.5,622.1 959.9,610.2 950.7,613.3 944.2,625.3" fill="#898989" stroke="#898989" stroke-width="0.4"/><polygon points="956.6,601.6 961.3,590.3 952.4,587.8 947.7,599.0" fill="#888888" stroke="#888888" stroke-width="0.4"/><polygon points="965.7,598.6 970.4,587.5 961.3,590.3 956.6,601.6" fill="#898989" stroke="#898989" stroke-width="0.4"/><polygon points="937.4,637.5 944.2,625.3 935.3,622.4 928.5,634.5" fill="#878787" stroke="#878787" stroke-width="0.4"/><polygon points="930.7,649.7 937.4,637.5 928.5,634.5 921.9,646.6" fill="#878787" stroke="#878787" stroke-width="0.4"/><polygon points="946.8,634.1 953.5,622.1 944.2,625.3 937.4,637.5" fill="#898989" stroke="#898989" stroke-width="0.4"/><polygon points="1002.2,462.6 1025.5,458.4 1026.0,445.9 1002.6,449.7" fill="#8a8a8a" stroke="#8a8a8a" stroke-width="0.4"/><polygon points="940.3,646.2 946.8,634.1 937.4,637.5 930.7,649.7" fill="#898989" stroke="#898989" stroke-width="0.4"/><polygon points="961.3,590.3 964.6,579.5 955.7,577.1 952.4,587.8" fill="#888888" stroke="#888888" stroke-width="0.4"/><polygon points="970.4,587.5 973.6,576.8 964.6,579.5 961.3,590.3" fill="#898989" stroke="#898989" stroke-width="0.4"/><polygon points="965.9,569.3 974.9,566.7 966.0,564.4 956.9,566.9" fill="#808080" stroke="#808080" stroke-width="0.4"/><polygon points="970.7,561.7 961.5,559.4 961.3,571.8 970.4,574.2" fill="#898989" stroke="#898989" stroke-width="0.4"/><polygon points="1171.4,452.2 1132.2,447.5 1131.3,460.1 1170.4,465.3" fill="#898989" stroke="#898989" stroke-width="0.4"/><polygon points="973.6,576.8 974.9,566.7 965.9,569.3 964.6,579.5" fill="#898989" stroke="#898989" stroke-width="0.4"/><polygon points="1176.4,511.4 1179.8,484.7 1173.6,486.3 1170.3,513.2" fill="#898989" stroke="#898989" stroke-width="0.4"/><polygon points="964.6,579.5 965.9,569.3 956.9,566.9 955.7,577.1" fill="#878787" stroke="#878787" stroke-width="0.4"/><polygon points="1173.6,486.3 1179.8,484.7 1170.2,483.3 1164.0,484.9" fill="#808080" stroke="#808080" stroke-width="0.4"/><polygon points="1170.3,513.2 1173.6,486.3 1164.0,484.9 1160.7,511.6" fill="#878787" stroke="#878787" stroke-width="0.4"/><polygon points="1149.0,565.8 1138.0,563.4 1137.2,575.9 1148.0,578.4" fill="#898989" stroke="#898989" stroke-width="0.4"/><polygon points="1002.6,449.7 993.1,448.4 992.8,461.2 1002.2,462.6" fill="#898989" stroke="#898989" stroke-width="0.4"/><polygon points="1179.8,484.7 1182.5,457.9 1176.3,459.3 1173.6,486.3" fill="#898989" stroke="#898989" stroke-width="0.4"/><polygon points="973.9,566.7 975.2,540.5 967.2,542.6 965.9,569.0" fill="#898989" stroke="#898989" stroke-width="0.4"/><polygon points="965.9,569.0 967.2,542.6 959.2,540.7 957.9,566.9" fill="#878787" stroke="#878787" stroke-width="0.4"/><polygon points="1176.3,459.3 1182.5,457.9 1172.8,456.7 1166.6,458.0" fill="#808080" stroke="#808080" stroke-width="0.4"/><polygon points="1180.6,452.2 1169.5,450.8 1168.5,463.7 1179.6,465.2" fill="#898989" stroke="#898989" stroke-width="0.4"/><polygon points="1170.4,465.3 1177.6,463.6 1178.6,450.7 1171.4,452.2" fill="#8a8a8a" stroke="#8a8a8a" stroke-width="0.4"/><polygon points="967.2,542.6 975.2,540.5 967.2,538.7 959.2,540.7" fill="#808080" stroke="#808080" stroke-width="0.4"/><polygon points="1173.6,486.3 1176.3,459.3 1166.6,458.0 1164.0,484.9" fill="#878787" stroke="#878787" stroke-width="0.4"/><polygon points="944.8,569.1 970.7,561.7 961.5,559.4 935.7,566.6" fill="#828282" stroke="#828282" stroke-width="0.4"/><polygon points="944.7,581.9 970.4,574.2 970.7,561.7 944.8,569.1" fill="#8a8a8a" stroke="#8a8a8a" stroke-width="0.4"/><polygon points="1005.0,567.9 970.6,559.3 961.4,561.9 995.8,570.6" fill="#828282" stroke="#828282" stroke-width="0.4"/><polygon points="975.2,540.5 977.4,513.8 969.4,515.7 967.2,542.6" fill="#898989" stroke="#898989" stroke-width="0.4"/><polygon points="967.2,542.6 969.4,515.7 961.3,514.0 959.2,540.7" fill="#878787" stroke="#878787" stroke-width="0.4"/><polygon points="969.4,515.7 977.4,513.8 969.4,512.2 961.3,514.0" fill="#808080" stroke="#808080" stroke-width="0.4"/><polygon points="995.8,570.6 961.4,561.9 961.2,574.4 995.4,583.5" fill="#898989" stroke="#898989" stroke-width="0.4"/><polygon points="977.8,453.8 1002.6,449.7 993.1,448.4 968.3,452.4" fill="#828282" stroke="#828282" stroke-width="0.4"/><polygon points="944.8,569.1 935.7,566.6 935.5,579.4 944.7,581.9" fill="#898989" stroke="#898989" stroke-width="0.4"/><polygon points="1128.1,573.3 1149.0,565.8 1138.0,563.4 1117.0,570.8" fill="#828282" stroke="#828282" stroke-width="0.4"/><polygon points="1127.2,586.4 1148.0,578.4 1149.0,565.8 1128.1,573.3" fill="#8a8a8a" stroke="#8a8a8a" stroke-width="0.4"/><polygon points="977.5,467.0 1002.2,462.6 1002.6,449.7 977.8,453.8" fill="#8a8a8a" stroke="#8a8a8a" stroke-width="0.4"/><polygon points="1160.7,456.3 1180.6,452.2 1169.5,450.8 1149.4,454.9" fill="#828282" stroke="#828282" stroke-width="0.4"/><polygon points="971.6,488.4 979.7,486.8 971.5,485.3 963.4,487.0" fill="#808080" stroke="#808080" stroke-width="0.4"/><polygon points="977.4,513.8 979.7,486.8 971.6,488.4 969.4,515.7" fill="#898989" stroke="#898989" stroke-width="0.4"/><polygon points="969.4,515.7 971.6,488.4 963.4,487.0 961.3,514.0" fill="#878787" stroke="#878787" stroke-width="0.4"/><polygon points="1087.3,472.6 1174.8,454.1 1064.4,440.6 973.0,455.7" fill="#9a9aa0" fill-opacity="0.68"/><polygon points="1159.8,469.7 1179.6,465.2 1180.6,452.2 1160.7,456.3" fill="#8a8a8a" stroke="#8a8a8a" stroke-width="0.4"/><polygon points="995.4,583.5 1004.6,580.6 1005.0,567.9 995.8,570.6" fill="#8a8a8a" stroke="#8a8a8a" stroke-width="0.4"/><polygon points="972.9,461.0 981.1,459.6 972.9,458.4 964.7,459.7" fill="#808080" stroke="#808080" stroke-width="0.4"/><polygon points="977.8,453.8 968.3,452.4 968.0,465.5 977.5,467.0" fill="#898989" stroke="#898989" stroke-width="0.4"/><polygon points="979.7,486.8 981.1,459.6 972.9,461.0 971.6,488.4" fill="#898989" stroke="#898989" stroke-width="0.4"/><polygon points="971.6,488.4 972.9,461.0 964.7,459.7 963.4,487.0" fill="#878787" stroke="#878787" stroke-width="0.4"/><polygon points="1128.1,573.3 1117.0,570.8 1116.2,583.7 1127.2,586.4" fill="#898989" stroke="#898989" stroke-width="0.4"/><polygon points="917.5,576.9 944.8,569.1 935.7,566.6 908.3,574.3" fill="#828282" stroke="#828282" stroke-width="0.4"/><polygon points="1160.7,456.3 1149.4,454.9 1148.5,468.2 1159.8,469.7" fill="#898989" stroke="#898989" stroke-width="0.4"/><polygon points="917.4,590.1 944.7,581.9 944.8,569.1 917.5,576.9" fill="#8a8a8a" stroke="#8a8a8a" stroke-width="0.4"/><polygon points="917.5,576.9 908.3,574.3 908.2,587.3 917.4,590.1" fill="#898989" stroke="#898989" stroke-width="0.4"/><polygon points="951.5,458.1 977.8,453.8 968.3,452.4 942.0,456.6" fill="#828282" stroke="#828282" stroke-width="0.4"/><polygon points="1041.7,577.0 1005.0,567.9 995.8,570.6 1032.6,580.0" fill="#828282" stroke="#828282" stroke-width="0.4"/><polygon points="951.3,471.7 977.5,467.0 977.8,453.8 951.5,458.1" fill="#8a8a8a" stroke="#8a8a8a" stroke-width="0.4"/><polygon points="1032.6,580.0 995.8,570.6 995.4,583.5 1032.1,593.4" fill="#898989" stroke="#898989" stroke-width="0.4"/><polygon points="1013.1,457.4 977.7,452.3 968.3,453.8 1003.8,459.1" fill="#828282" stroke="#828282" stroke-width="0.4"/><polygon points="1105.9,581.4 1128.1,573.3 1117.0,570.8 1094.7,578.7" fill="#828282" stroke="#828282" stroke-width="0.4"/><polygon points="1105.1,594.8 1127.2,586.4 1128.1,573.3 1105.9,581.4" fill="#8a8a8a" stroke="#8a8a8a" stroke-width="0.4"/><polygon points="1003.8,459.1 968.3,453.8 968.0,467.1 1003.4,472.7" fill="#898989" stroke="#898989" stroke-width="0.4"/><polygon points="1139.6,460.8 1160.7,456.3 1149.4,454.9 1128.2,459.3" fill="#828282" stroke="#828282" stroke-width="0.4"/><polygon points="1138.7,474.6 1159.8,469.7 1160.7,456.3 1139.6,460.8" fill="#8a8a8a" stroke="#8a8a8a" stroke-width="0.4"/><polygon points="951.5,458.1 942.0,456.6 941.8,470.1 951.3,471.7" fill="#898989" stroke="#898989" stroke-width="0.4"/><polygon points="888.4,585.1 917.5,576.9 908.3,574.3 879.2,582.4" fill="#828282" stroke="#828282" stroke-width="0.4"/><polygon points="1032.1,593.4 1041.1,590.2 1041.7,577.0 1032.6,580.0" fill="#8a8a8a" stroke="#8a8a8a" stroke-width="0.4"/><polygon points="1105.9,581.4 1094.7,578.7 1093.9,592.0 1105.1,594.8" fill="#898989" stroke="#898989" stroke-width="0.4"/><polygon points="888.4,598.7 917.4,590.1 917.5,576.9 888.4,585.1" fill="#8a8a8a" stroke="#8a8a8a" stroke-width="0.4"/><polygon points="790.9,758.0 790.3,737.6 776.0,730.2 776.7,750.2" fill="#b2b2b6" stroke="#b2b2b6" stroke-width="0.4"/><polygon points="1003.4,472.7 1012.7,470.9 1013.1,457.4 1003.8,459.1" fill="#8a8a8a" stroke="#8a8a8a" stroke-width="0.4"/><polygon points="790.3,737.6 811.1,729.2 796.7,722.1 776.0,730.2" fill="#a9a9ad" stroke="#a9a9ad" stroke-width="0.4"/><polygon points="811.6,749.2 811.1,729.2 790.3,737.6 790.9,758.0" fill="#b5b5b9" stroke="#b5b5b9" stroke-width="0.4"/><polygon points="888.4,585.1 879.2,582.4 879.3,595.8 888.4,598.7" fill="#898989" stroke="#898989" stroke-width="0.4"/><polygon points="1139.6,460.8 1128.2,459.3 1127.3,472.9 1138.7,474.6" fill="#898989" stroke="#898989" stroke-width="0.4"/><polygon points="796.6,721.3 809.0,716.5 800.4,712.3 788.0,717.1" fill="#808080" stroke="#808080" stroke-width="0.4"/><polygon points="792.9,733.9 796.6,721.3 788.0,717.1 784.3,729.5" fill="#888888" stroke="#888888" stroke-width="0.4"/><polygon points="923.6,462.6 951.5,458.1 942.0,456.6 914.1,461.1" fill="#828282" stroke="#828282" stroke-width="0.4"/><polygon points="805.4,728.9 809.0,716.5 796.6,721.3 792.9,733.9" fill="#898989" stroke="#898989" stroke-width="0.4"/><polygon points="802.4,708.0 814.7,703.4 806.0,699.3 793.7,703.9" fill="#808080" stroke="#808080" stroke-width="0.4"/><polygon points="923.5,476.6 951.3,471.7 951.5,458.1 923.6,462.6" fill="#8a8a8a" stroke="#8a8a8a" stroke-width="0.4"/><polygon points="796.6,721.3 802.4,708.0 793.7,703.9 788.0,717.1" fill="#888888" stroke="#888888" stroke-width="0.4"/><polygon points="809.6,694.2 821.8,689.7 813.1,685.9 800.9,690.2" fill="#808080" stroke="#808080" stroke-width="0.4"/><polygon points="1040.0,742.7 1040.9,722.9 1024.9,731.1 1024.1,751.1" fill="#b5b5b9" stroke="#b5b5b9" stroke-width="0.4"/><polygon points="809.0,716.5 814.7,703.4 802.4,708.0 796.6,721.3" fill="#898989" stroke="#898989" stroke-width="0.4"/><polygon points="1024.9,731.1 1040.9,722.9 1023.0,716.0 1006.9,723.9" fill="#a9a9ad" stroke="#a9a9ad" stroke-width="0.4"/><polygon points="1024.1,751.1 1024.9,731.1 1006.9,723.9 1006.2,743.6" fill="#b2b2b6" stroke="#b2b2b6" stroke-width="0.4"/><polygon points="817.7,680.2 829.7,675.9 821.0,672.2 809.0,676.4" fill="#808080" stroke="#808080" stroke-width="0.4"/><polygon points="802.4,708.0 809.6,694.2 800.9,690.2 793.7,703.9" fill="#878787" stroke="#878787" stroke-width="0.4"/><polygon points="1081.1,586.9 1041.7,577.0 1032.6,580.0 1072.1,590.1" fill="#828282" stroke="#828282" stroke-width="0.4"/><polygon points="826.0,666.2 837.9,662.1 829.1,658.5 817.2,662.6" fill="#808080" stroke="#808080" stroke-width="0.4"/><polygon points="1082.3,589.9 1105.9,581.4 1094.7,578.7 1071.0,587.1" fill="#828282" stroke="#828282" stroke-width="0.4"/><polygon points="814.7,703.4 821.8,689.7 809.6,694.2 802.4,708.0" fill="#898989" stroke="#898989" stroke-width="0.4"/><polygon points="1081.5,603.7 1105.1,594.8 1105.9,581.4 1082.3,589.9" fill="#8a8a8a" stroke="#8a8a8a" stroke-width="0.4"/><polygon points="834.0,652.5 845.7,648.5 836.9,645.1 825.2,649.0" fill="#808080" stroke="#808080" stroke-width="0.4"/><polygon points="1029.1,715.1 1038.6,710.4 1027.8,706.4 1018.3,711.0" fill="#808080" stroke="#808080" stroke-width="0.4"/><polygon points="809.6,694.2 817.7,680.2 809.0,676.4 800.9,690.2" fill="#878787" stroke="#878787" stroke-width="0.4"/><polygon points="1072.1,590.1 1032.6,580.0 1032.1,593.4 1071.4,603.9" fill="#898989" stroke="#898989" stroke-width="0.4"/><polygon points="841.0,639.1 852.6,635.3 843.8,632.1 832.2,635.7" fill="#808080" stroke="#808080" stroke-width="0.4"/><polygon points="1035.1,722.6 1038.6,710.4 1029.1,715.1 1025.6,727.4" fill="#898989" stroke="#898989" stroke-width="0.4"/><polygon points="821.8,689.7 829.7,675.9 817.7,680.2 809.6,694.2" fill="#898989" stroke="#898989" stroke-width="0.4"/><polygon points="817.7,680.2 826.0,666.2 817.2,662.6 809.0,676.4" fill="#878787" stroke="#878787" stroke-width="0.4"/><polygon points="1025.6,727.4 1029.1,715.1 1018.3,711.0 1014.8,723.2" fill="#888888" stroke="#888888" stroke-width="0.4"/><polygon points="923.6,462.6 914.1,461.1 914.0,475.0 923.5,476.6" fill="#898989" stroke="#898989" stroke-width="0.4"/><polygon points="1034.2,702.0 1043.7,697.5 1032.8,693.6 1023.4,698.0" fill="#808080" stroke="#808080" stroke-width="0.4"/><polygon points="857.5,593.9 888.4,585.1 879.2,582.4 848.3,591.0" fill="#828282" stroke="#828282" stroke-width="0.4"/><polygon points="1067.2,634.3 1076.1,630.7 1065.2,627.5 1056.3,631.1" fill="#808080" stroke="#808080" stroke-width="0.4"/><polygon points="826.0,666.2 834.0,652.5 825.2,649.0 817.2,662.6" fill="#878787" stroke="#878787" stroke-width="0.4"/><polygon points="1061.1,647.5 1070.1,643.7 1059.2,640.3 1050.2,644.1" fill="#808080" stroke="#808080" stroke-width="0.4"/><polygon points="846.7,626.2 858.2,622.6 849.3,619.5 837.8,623.0" fill="#808080" stroke="#808080" stroke-width="0.4"/><polygon points="829.7,675.9 837.9,662.1 826.0,666.2 817.7,680.2" fill="#898989" stroke="#898989" stroke-width="0.4"/><polygon points="1051.1,462.9 1013.1,457.4 1003.8,459.1 1041.9,464.6" fill="#828282" stroke="#828282" stroke-width="0.4"/><polygon points="1054.4,661.0 1063.4,657.0 1052.6,653.5 1043.4,657.4" fill="#808080" stroke="#808080" stroke-width="0.4"/><polygon points="1040.4,688.5 1049.8,684.1 1038.9,680.4 1029.6,684.6" fill="#808080" stroke="#808080" stroke-width="0.4"/><polygon points="1072.2,621.7 1081.0,618.2 1070.1,615.2 1061.2,618.6" fill="#808080" stroke="#808080" stroke-width="0.4"/><polygon points="1047.3,674.7 1056.5,670.5 1045.7,666.9 1036.4,671.0" fill="#808080" stroke="#808080" stroke-width="0.4"/><polygon points="834.0,652.5 841.0,639.1 832.2,635.7 825.2,649.0" fill="#878787" stroke="#878787" stroke-width="0.4"/><polygon points="837.9,662.1 845.7,648.5 834.0,652.5 826.0,666.2" fill="#898989" stroke="#898989" stroke-width="0.4"/><polygon points="857.6,607.9 888.4,598.7 888.4,585.1 857.5,593.9" fill="#8a8a8a" stroke="#8a8a8a" stroke-width="0.4"/><polygon points="1038.6,710.4 1043.7,697.5 1034.2,702.0 1029.1,715.1" fill="#898989" stroke="#898989" stroke-width="0.4"/><polygon points="1117.2,465.5 1139.6,460.8 1128.2,459.3 1105.6,463.9" fill="#828282" stroke="#828282" stroke-width="0.4"/><polygon points="845.7,648.5 852.6,635.3 841.0,639.1 834.0,652.5" fill="#898989" stroke="#898989" stroke-width="0.4"/><polygon points="1029.1,715.1 1034.2,702.0 1023.4,698.0 1018.3,711.0" fill="#888888" stroke="#888888" stroke-width="0.4"/><polygon points="1075.7,609.7 1084.5,606.4 1073.5,603.4 1064.7,606.7" fill="#808080" stroke="#808080" stroke-width="0.4"/><polygon points="841.0,639.1 846.7,626.2 837.8,623.0 832.2,635.7" fill="#888888" stroke="#888888" stroke-width="0.4"/><polygon points="850.4,614.1 861.9,610.6 852.9,607.6 841.5,611.0" fill="#808080" stroke="#808080" stroke-width="0.4"/><polygon points="1041.9,464.6 1003.8,459.1 1003.4,472.7 1041.3,478.8" fill="#898989" stroke="#898989" stroke-width="0.4"/><polygon points="1070.1,643.7 1076.1,630.7 1067.2,634.3 1061.1,647.5" fill="#898989" stroke="#898989" stroke-width="0.4"/><polygon points="1043.7,697.5 1049.8,684.1 1040.4,688.5 1034.2,702.0" fill="#898989" stroke="#898989" stroke-width="0.4"/><polygon points="1063.4,657.0 1070.1,643.7 1061.1,647.5 1054.4,661.0" fill="#898989" stroke="#898989" stroke-width="0.4"/><polygon points="852.6,635.3 858.2,622.6 846.7,626.2 841.0,639.1" fill="#898989" stroke="#898989" stroke-width="0.4"/><polygon points="1076.1,630.7 1081.0,618.2 1072.2,621.7 1067.2,634.3" fill="#898989" stroke="#898989" stroke-width="0.4"/><polygon points="1116.3,479.7 1138.7,474.6 1139.6,460.8 1117.2,465.5" fill="#8a8a8a" stroke="#8a8a8a" stroke-width="0.4"/><polygon points="1056.5,670.5 1063.4,657.0 1054.4,661.0 1047.3,674.7" fill="#898989" stroke="#898989" stroke-width="0.4"/><polygon points="1049.8,684.1 1056.5,670.5 1047.3,674.7 1040.4,688.5" fill="#898989" stroke="#898989" stroke-width="0.4"/><polygon points="1034.2,702.0 1040.4,688.5 1029.6,684.6 1023.4,698.0" fill="#878787" stroke="#878787" stroke-width="0.4"/><polygon points="1061.1,647.5 1067.2,634.3 1056.3,631.1 1050.2,644.1" fill="#878787" stroke="#878787" stroke-width="0.4"/><polygon points="1054.4,661.0 1061.1,647.5 1050.2,644.1 1043.4,657.4" fill="#878787" stroke="#878787" stroke-width="0.4"/><polygon points="1067.2,634.3 1072.2,621.7 1061.2,618.6 1056.3,631.1" fill="#888888" stroke="#888888" stroke-width="0.4"/><polygon points="1047.3,674.7 1054.4,661.0 1043.4,657.4 1036.4,671.0" fill="#878787" stroke="#878787" stroke-width="0.4"/><polygon points="1040.4,688.5 1047.3,674.7 1036.4,671.0 1029.6,684.6" fill="#878787" stroke="#878787" stroke-width="0.4"/><polygon points="846.7,626.2 850.4,614.1 841.5,611.0 837.8,623.0" fill="#888888" stroke="#888888" stroke-width="0.4"/><polygon points="1081.0,618.2 1084.5,606.4 1075.7,609.7 1072.2,621.7" fill="#898989" stroke="#898989" stroke-width="0.4"/><polygon points="858.2,622.6 861.9,610.6 850.4,614.1 846.7,626.2" fill="#898989" stroke="#898989" stroke-width="0.4"/><polygon points="1072.2,621.7 1075.7,609.7 1064.7,606.7 1061.2,618.6" fill="#888888" stroke="#888888" stroke-width="0.4"/><polygon points="1077.4,598.4 1086.1,595.2 1075.1,592.4 1066.4,595.5" fill="#808080" stroke="#808080" stroke-width="0.4"/><polygon points="1082.3,589.9 1071.0,587.1 1070.3,600.7 1081.5,603.7" fill="#898989" stroke="#898989" stroke-width="0.4"/><polygon points="1071.4,603.9 1080.3,600.5 1081.1,586.9 1072.1,590.1" fill="#8a8a8a" stroke="#8a8a8a" stroke-width="0.4"/><polygon points="851.7,602.6 863.2,599.2 854.2,596.3 842.7,599.6" fill="#808080" stroke="#808080" stroke-width="0.4"/><polygon points="857.5,593.9 848.3,591.0 848.5,604.8 857.6,607.9" fill="#898989" stroke="#898989" stroke-width="0.4"/><polygon points="1084.5,606.4 1086.1,595.2 1077.4,598.4 1075.7,609.7" fill="#898989" stroke="#898989" stroke-width="0.4"/><polygon points="850.4,614.1 851.7,602.6 842.7,599.6 841.5,611.0" fill="#878787" stroke="#878787" stroke-width="0.4"/><polygon points="1075.7,609.7 1077.4,598.4 1066.4,595.5 1064.7,606.7" fill="#878787" stroke="#878787" stroke-width="0.4"/><polygon points="861.9,610.6 863.2,599.2 851.7,602.6 850.4,614.1" fill="#898989" stroke="#898989" stroke-width="0.4"/><polygon points="893.9,467.5 923.6,462.6 914.1,461.1 884.4,465.9" fill="#828282" stroke="#828282" stroke-width="0.4"/><polygon points="1041.3,478.8 1050.5,476.9 1051.1,462.9 1041.9,464.6" fill="#8a8a8a" stroke="#8a8a8a" stroke-width="0.4"/><polygon points="965.0,631.5 1076.5,591.2 966.0,563.1 852.9,595.3" fill="#9a9aa0" fill-opacity="0.68"/><polygon points="1117.2,465.5 1105.6,463.9 1104.8,478.0 1116.3,479.7" fill="#898989" stroke="#898989" stroke-width="0.4"/><polygon points="1085.0,595.2 1087.3,566.4 1079.5,569.0 1077.3,598.1" fill="#898989" stroke="#898989" stroke-width="0.4"/><polygon points="893.9,481.9 923.5,476.6 923.6,462.6 893.9,467.5" fill="#8a8a8a" stroke="#8a8a8a" stroke-width="0.4"/><polygon points="851.8,602.2 852.4,572.7 844.4,570.3 843.9,599.6" fill="#878787" stroke="#878787" stroke-width="0.4"/><polygon points="1077.3,598.1 1079.5,569.0 1069.6,566.7 1067.5,595.5" fill="#878787" stroke="#878787" stroke-width="0.4"/><polygon points="862.0,599.3 862.7,570.0 852.4,572.7 851.8,602.2" fill="#898989" stroke="#898989" stroke-width="0.4"/><polygon points="1079.5,569.0 1087.3,566.4 1077.5,564.1 1069.6,566.7" fill="#808080" stroke="#808080" stroke-width="0.4"/><polygon points="852.4,572.7 862.7,570.0 854.6,567.7 844.4,570.3" fill="#808080" stroke="#808080" stroke-width="0.4"/><polygon points="893.9,467.5 884.4,465.9 884.5,480.1 893.9,481.9" fill="#898989" stroke="#898989" stroke-width="0.4"/><polygon points="1057.2,599.0 1082.3,589.9 1071.0,587.1 1045.8,596.0" fill="#828282" stroke="#828282" stroke-width="0.4"/><polygon points="1056.5,613.2 1081.5,603.7 1082.3,589.9 1057.2,599.0" fill="#8a8a8a" stroke="#8a8a8a" stroke-width="0.4"/><polygon points="1087.3,566.4 1090.5,536.9 1082.7,539.2 1079.5,569.0" fill="#898989" stroke="#898989" stroke-width="0.4"/><polygon points="852.4,572.7 854.1,542.4 846.1,540.3 844.4,570.3" fill="#878787" stroke="#878787" stroke-width="0.4"/><polygon points="1079.5,569.0 1082.7,539.2 1072.7,537.1 1069.6,566.7" fill="#878787" stroke="#878787" stroke-width="0.4"/><polygon points="1082.7,539.2 1090.5,536.9 1080.5,534.8 1072.7,537.1" fill="#808080" stroke="#808080" stroke-width="0.4"/><polygon points="893.3,601.7 858.7,590.8 847.0,594.1 881.5,605.3" fill="#828282" stroke="#828282" stroke-width="0.4"/><polygon points="862.7,570.0 864.5,540.0 854.1,542.4 852.4,572.7" fill="#898989" stroke="#898989" stroke-width="0.4"/><polygon points="881.5,605.3 847.0,594.1 847.2,608.1 881.5,619.8" fill="#898989" stroke="#898989" stroke-width="0.4"/><polygon points="854.1,542.4 864.5,540.0 856.4,537.9 846.1,540.3" fill="#808080" stroke="#808080" stroke-width="0.4"/><polygon points="1092.0,468.8 1051.1,462.9 1041.9,464.6 1082.9,470.6" fill="#828282" stroke="#828282" stroke-width="0.4"/><polygon points="1093.3,470.5 1117.2,465.5 1105.6,463.9 1081.6,468.8" fill="#828282" stroke="#828282" stroke-width="0.4"/><polygon points="1057.2,599.0 1045.8,596.0 1045.2,610.0 1056.5,613.2" fill="#898989" stroke="#898989" stroke-width="0.4"/><polygon points="1092.5,485.2 1116.3,479.7 1117.2,465.5 1093.3,470.5" fill="#8a8a8a" stroke="#8a8a8a" stroke-width="0.4"/><polygon points="1082.9,470.6 1041.9,464.6 1041.3,478.8 1082.1,485.3" fill="#898989" stroke="#898989" stroke-width="0.4"/><polygon points="1090.5,536.9 1093.7,507.0 1085.8,509.0 1082.7,539.2" fill="#898989" stroke="#898989" stroke-width="0.4"/><polygon points="862.3,472.7 893.9,467.5 884.4,465.9 852.8,470.9" fill="#828282" stroke="#828282" stroke-width="0.4"/><polygon points="1085.8,509.0 1093.7,507.0 1083.6,505.2 1075.8,507.2" fill="#808080" stroke="#808080" stroke-width="0.4"/><polygon points="1082.7,539.2 1085.8,509.0 1075.8,507.2 1072.7,537.1" fill="#878787" stroke="#878787" stroke-width="0.4"/><polygon points="854.1,542.4 855.9,511.8 847.7,509.9 846.1,540.3" fill="#878787" stroke="#878787" stroke-width="0.4"/><polygon points="855.9,511.8 866.3,509.7 858.1,507.9 847.7,509.9" fill="#808080" stroke="#808080" stroke-width="0.4"/><polygon points="864.5,540.0 866.3,509.7 855.9,511.8 854.1,542.4" fill="#898989" stroke="#898989" stroke-width="0.4"/><polygon points="862.5,487.6 893.9,481.9 893.9,467.5 862.3,472.7" fill="#8a8a8a" stroke="#8a8a8a" stroke-width="0.4"/><polygon points="881.5,619.8 893.3,616.1 893.3,601.7 881.5,605.3" fill="#8a8a8a" stroke="#8a8a8a" stroke-width="0.4"/><polygon points="1093.7,507.0 1096.1,476.9 1088.2,478.6 1085.8,509.0" fill="#898989" stroke="#898989" stroke-width="0.4"/><polygon points="1088.2,478.6 1096.1,476.9 1085.9,475.4 1078.0,477.1" fill="#808080" stroke="#808080" stroke-width="0.4"/><polygon points="1093.3,470.5 1081.6,468.8 1080.9,483.3 1092.5,485.2" fill="#898989" stroke="#898989" stroke-width="0.4"/><polygon points="1082.1,485.3 1091.2,483.2 1092.0,468.8 1082.9,470.6" fill="#8a8a8a" stroke="#8a8a8a" stroke-width="0.4"/><polygon points="1085.8,509.0 1088.2,478.6 1078.0,477.1 1075.8,507.2" fill="#878787" stroke="#878787" stroke-width="0.4"/><polygon points="855.9,511.8 856.5,480.9 848.3,479.3 847.7,509.9" fill="#878787" stroke="#878787" stroke-width="0.4"/><polygon points="856.5,480.9 867.0,479.1 858.7,477.6 848.3,479.3" fill="#808080" stroke="#808080" stroke-width="0.4"/><polygon points="862.3,472.7 852.8,470.9 853.0,485.7 862.5,487.6" fill="#898989" stroke="#898989" stroke-width="0.4"/><polygon points="866.3,509.7 867.0,479.1 856.5,480.9 855.9,511.8" fill="#898989" stroke="#898989" stroke-width="0.4"/><polygon points="1030.4,608.7 1057.2,599.0 1045.8,596.0 1018.9,605.5" fill="#828282" stroke="#828282" stroke-width="0.4"/><polygon points="1029.8,623.3 1056.5,613.2 1057.2,599.0 1030.4,608.7" fill="#8a8a8a" stroke="#8a8a8a" stroke-width="0.4"/><polygon points="973.9,496.6 1087.3,472.6 973.0,455.7 857.6,474.8" fill="#9a9aa0" fill-opacity="0.68"/><polygon points="1030.4,608.7 1018.9,605.5 1018.4,620.0 1029.8,623.3" fill="#898989" stroke="#898989" stroke-width="0.4"/><polygon points="1067.9,475.9 1093.3,470.5 1081.6,468.8 1056.0,474.1" fill="#828282" stroke="#828282" stroke-width="0.4"/><polygon points="1067.1,491.0 1092.5,485.2 1093.3,470.5 1067.9,475.9" fill="#8a8a8a" stroke="#8a8a8a" stroke-width="0.4"/><polygon points="930.5,613.5 893.3,601.7 881.5,605.3 918.8,617.4" fill="#828282" stroke="#828282" stroke-width="0.4"/><polygon points="918.8,617.4 881.5,605.3 881.5,619.8 918.7,632.4" fill="#898989" stroke="#898989" stroke-width="0.4"/><polygon points="899.3,477.4 863.5,470.8 851.5,472.8 887.2,479.5" fill="#828282" stroke="#828282" stroke-width="0.4"/><polygon points="887.2,479.5 851.5,472.8 851.7,487.7 887.3,494.9" fill="#898989" stroke="#898989" stroke-width="0.4"/><polygon points="1067.9,475.9 1056.0,474.1 1055.4,489.1 1067.1,491.0" fill="#898989" stroke="#898989" stroke-width="0.4"/><polygon points="1001.7,619.1 1030.4,608.7 1018.9,605.5 990.1,615.7" fill="#828282" stroke="#828282" stroke-width="0.4"/><polygon points="1001.2,634.2 1029.8,623.3 1030.4,608.7 1001.7,619.1" fill="#8a8a8a" stroke="#8a8a8a" stroke-width="0.4"/><polygon points="918.7,632.4 930.4,628.4 930.5,613.5 918.8,617.4" fill="#8a8a8a" stroke="#8a8a8a" stroke-width="0.4"/><polygon points="899.9,817.1 900.0,794.5 881.7,785.0 881.8,807.2" fill="#b2b2b6" stroke="#b2b2b6" stroke-width="0.4"/><polygon points="920.9,806.0 921.1,783.8 900.0,794.5 899.9,817.1" fill="#b5b5b9" stroke="#b5b5b9" stroke-width="0.4"/><polygon points="900.0,794.5 921.1,783.8 902.8,774.7 881.7,785.0" fill="#a9a9ad" stroke="#a9a9ad" stroke-width="0.4"/><polygon points="887.3,494.9 899.2,492.6 899.3,477.4 887.2,479.5" fill="#8a8a8a" stroke="#8a8a8a" stroke-width="0.4"/><polygon points="1001.7,619.1 990.1,615.7 989.7,630.6 1001.2,634.2" fill="#898989" stroke="#898989" stroke-width="0.4"/><polygon points="906.0,775.5 918.6,769.3 907.6,764.0 895.0,770.0" fill="#808080" stroke="#808080" stroke-width="0.4"/><polygon points="901.9,789.7 906.0,775.5 895.0,770.0 890.9,784.1" fill="#888888" stroke="#888888" stroke-width="0.4"/><polygon points="914.5,783.3 918.6,769.3 906.0,775.5 901.9,789.7" fill="#898989" stroke="#898989" stroke-width="0.4"/><polygon points="1040.6,481.7 1067.9,475.9 1056.0,474.1 1028.7,479.7" fill="#828282" stroke="#828282" stroke-width="0.4"/><polygon points="912.3,760.3 924.7,754.3 913.7,749.2 901.2,755.0" fill="#808080" stroke="#808080" stroke-width="0.4"/><polygon points="1040.0,497.3 1067.1,491.0 1067.9,475.9 1040.6,481.7" fill="#8a8a8a" stroke="#8a8a8a" stroke-width="0.4"/><polygon points="906.0,775.5 912.3,760.3 901.2,755.0 895.0,770.0" fill="#888888" stroke="#888888" stroke-width="0.4"/><polygon points="918.6,769.3 924.7,754.3 912.3,760.3 906.0,775.5" fill="#898989" stroke="#898989" stroke-width="0.4"/><polygon points="919.9,744.5 932.2,738.8 921.2,733.8 908.9,739.4" fill="#808080" stroke="#808080" stroke-width="0.4"/><polygon points="928.5,728.4 940.6,722.9 929.5,718.2 917.3,723.5" fill="#808080" stroke="#808080" stroke-width="0.4"/><polygon points="912.3,760.3 919.9,744.5 908.9,739.4 901.2,755.0" fill="#878787" stroke="#878787" stroke-width="0.4"/><polygon points="924.7,754.3 932.2,738.8 919.9,744.5 912.3,760.3" fill="#898989" stroke="#898989" stroke-width="0.4"/><polygon points="937.2,712.3 949.1,707.1 938.0,702.6 926.0,707.7" fill="#808080" stroke="#808080" stroke-width="0.4"/><polygon points="970.9,626.3 930.5,613.5 918.8,617.4 959.2,630.5" fill="#828282" stroke="#828282" stroke-width="0.4"/><polygon points="959.2,630.5 918.8,617.4 918.7,632.4 958.9,646.1" fill="#898989" stroke="#898989" stroke-width="0.4"/><polygon points="945.6,696.6 957.3,691.6 946.2,687.3 934.4,692.2" fill="#808080" stroke="#808080" stroke-width="0.4"/><polygon points="919.9,744.5 928.5,728.4 917.3,723.5 908.9,739.4" fill="#878787" stroke="#878787" stroke-width="0.4"/><polygon points="932.2,738.8 940.6,722.9 928.5,728.4 919.9,744.5" fill="#898989" stroke="#898989" stroke-width="0.4"/><polygon points="953.1,681.3 964.7,676.6 953.5,672.4 941.8,677.1" fill="#808080" stroke="#808080" stroke-width="0.4"/><polygon points="928.5,728.4 937.2,712.3 926.0,707.7 917.3,723.5" fill="#878787" stroke="#878787" stroke-width="0.4"/><polygon points="940.6,722.9 949.1,707.1 937.2,712.3 928.5,728.4" fill="#898989" stroke="#898989" stroke-width="0.4"/><polygon points="1040.6,481.7 1028.7,479.7 1028.1,495.2 1040.0,497.3" fill="#898989" stroke="#898989" stroke-width="0.4"/><polygon points="971.0,630.3 1001.7,619.1 990.1,615.7 959.3,626.5" fill="#828282" stroke="#828282" stroke-width="0.4"/><polygon points="937.2,712.3 945.6,696.6 934.4,692.2 926.0,707.7" fill="#878787" stroke="#878787" stroke-width="0.4"/><polygon points="959.1,666.8 970.6,662.2 959.4,658.2 947.8,662.7" fill="#808080" stroke="#808080" stroke-width="0.4"/><polygon points="949.1,707.1 957.3,691.6 945.6,696.6 937.2,712.3" fill="#898989" stroke="#898989" stroke-width="0.4"/><polygon points="970.6,645.8 1001.2,634.2 1001.7,619.1 971.0,630.3" fill="#8a8a8a" stroke="#8a8a8a" stroke-width="0.4"/><polygon points="945.6,696.6 953.1,681.3 941.8,677.1 934.4,692.2" fill="#878787" stroke="#878787" stroke-width="0.4"/><polygon points="957.3,691.6 964.7,676.6 953.1,681.3 945.6,696.6" fill="#898989" stroke="#898989" stroke-width="0.4"/><polygon points="937.9,484.4 899.3,477.4 887.2,479.5 925.9,486.7" fill="#828282" stroke="#828282" stroke-width="0.4"/><polygon points="953.1,681.3 959.1,666.8 947.8,662.7 941.8,677.1" fill="#888888" stroke="#888888" stroke-width="0.4"/><polygon points="964.7,676.6 970.6,662.2 959.1,666.8 953.1,681.3" fill="#898989" stroke="#898989" stroke-width="0.4"/><polygon points="963.2,653.0 974.7,648.6 963.4,644.8 951.9,649.1" fill="#808080" stroke="#808080" stroke-width="0.4"/><polygon points="925.9,486.7 887.2,479.5 887.3,494.9 925.8,502.7" fill="#898989" stroke="#898989" stroke-width="0.4"/><polygon points="959.1,666.8 963.2,653.0 951.9,649.1 947.8,662.7" fill="#888888" stroke="#888888" stroke-width="0.4"/><polygon points="970.6,662.2 974.7,648.6 963.2,653.0 959.1,666.8" fill="#898989" stroke="#898989" stroke-width="0.4"/><polygon points="964.9,640.2 976.3,635.9 965.0,632.2 953.5,636.4" fill="#808080" stroke="#808080" stroke-width="0.4"/><polygon points="971.0,630.3 959.3,626.5 959.0,641.9 970.6,645.8" fill="#898989" stroke="#898989" stroke-width="0.4"/><polygon points="958.9,646.1 970.6,641.7 970.9,626.3 959.2,630.5" fill="#8a8a8a" stroke="#8a8a8a" stroke-width="0.4"/><polygon points="974.7,648.6 976.3,635.9 964.9,640.2 963.2,653.0" fill="#898989" stroke="#898989" stroke-width="0.4"/><polygon points="963.2,653.0 964.9,640.2 953.5,636.4 951.9,649.1" fill="#878787" stroke="#878787" stroke-width="0.4"/><polygon points="1011.4,487.8 1040.6,481.7 1028.7,479.7 999.4,485.7" fill="#828282" stroke="#828282" stroke-width="0.4"/><polygon points="1010.9,503.9 1040.0,497.3 1040.6,481.7 1011.4,487.8" fill="#8a8a8a" stroke="#8a8a8a" stroke-width="0.4"/><polygon points="925.8,502.7 937.8,500.3 937.9,484.4 925.9,486.7" fill="#8a8a8a" stroke="#8a8a8a" stroke-width="0.4"/><polygon points="975.1,635.9 976.8,603.3 966.5,606.7 964.9,639.7" fill="#898989" stroke="#898989" stroke-width="0.4"/><polygon points="964.9,639.7 966.5,606.7 956.3,603.7 954.8,636.4" fill="#878787" stroke="#878787" stroke-width="0.4"/><polygon points="966.5,606.7 976.8,603.3 966.6,600.3 956.3,603.7" fill="#808080" stroke="#808080" stroke-width="0.4"/><polygon points="1011.4,487.8 999.4,485.7 998.9,501.7 1010.9,503.9" fill="#898989" stroke="#898989" stroke-width="0.4"/><polygon points="976.8,603.3 979.6,569.8 969.3,572.8 966.5,606.7" fill="#898989" stroke="#898989" stroke-width="0.4"/><polygon points="966.5,606.7 969.3,572.8 959.0,570.1 956.3,603.7" fill="#878787" stroke="#878787" stroke-width="0.4"/><polygon points="969.3,572.8 979.6,569.8 969.3,567.1 959.0,570.1" fill="#808080" stroke="#808080" stroke-width="0.4"/><polygon points="979.9,492.1 937.9,484.4 925.9,486.7 968.0,494.6" fill="#828282" stroke="#828282" stroke-width="0.4"/><polygon points="968.0,494.6 925.9,486.7 925.8,502.7 967.6,511.3" fill="#898989" stroke="#898989" stroke-width="0.4"/><polygon points="980.1,494.4 1011.4,487.8 999.4,485.7 968.0,492.2" fill="#828282" stroke="#828282" stroke-width="0.4"/><polygon points="979.6,569.8 982.4,535.8 972.1,538.4 969.3,572.8" fill="#898989" stroke="#898989" stroke-width="0.4"/><polygon points="969.3,572.8 972.1,538.4 961.7,536.0 959.0,570.1" fill="#878787" stroke="#878787" stroke-width="0.4"/><polygon points="972.1,538.4 982.4,535.8 972.1,533.4 961.7,536.0" fill="#808080" stroke="#808080" stroke-width="0.4"/><polygon points="979.7,511.1 1010.9,503.9 1011.4,487.8 980.1,494.4" fill="#8a8a8a" stroke="#8a8a8a" stroke-width="0.4"/><polygon points="982.4,535.8 984.2,501.5 973.8,503.8 972.1,538.4" fill="#898989" stroke="#898989" stroke-width="0.4"/><polygon points="972.1,538.4 973.8,503.8 963.3,501.7 961.7,536.0" fill="#878787" stroke="#878787" stroke-width="0.4"/><polygon points="973.8,503.8 984.2,501.5 973.8,499.5 963.3,501.7" fill="#808080" stroke="#808080" stroke-width="0.4"/><polygon points="980.1,494.4 968.0,492.2 967.6,508.7 979.7,511.1" fill="#898989" stroke="#898989" stroke-width="0.4"/><polygon points="967.6,511.3 979.5,508.6 979.9,492.1 968.0,494.6" fill="#8a8a8a" stroke="#8a8a8a" stroke-width="0.4"/></svg><svg class="a" style="left:0;top:0" width="1460" height="971">
<line x1="901" y1="794" x2="900" y2="752" stroke="#0000ff" stroke-width="1.3"/>
<path d="M900 746 L904.5 762 L895.5 762Z" fill="#0000ff"/>
<text x="901.5" y="752" font-family="Liberation Sans" font-weight="bold" font-size="9" fill="#0000ff">Z</text>
<line x1="901" y1="794" x2="930" y2="779" stroke="#ff0000" stroke-width="1"/>
<path d="M939 775 L925 777 L929 784Z" fill="#ff0000"/>
<text x="944.5" y="782" font-family="Liberation Sans" font-weight="bold" font-size="9" fill="#cc0000">X</text>
<line x1="901" y1="794" x2="876" y2="782" stroke="#008000" stroke-width="1"/>
<path d="M868 778 L879 779.5 L876 785Z" fill="#006400"/>
</svg>
<svg class="a" style="left:0;top:0" width="1460" height="200" viewBox="0 0 1460 200">
<defs>
<linearGradient id="gBlue" x1="0" y1="0" x2="0" y2="1"><stop offset="0" stop-color="#3f8ee8"/><stop offset="1" stop-color="#0b4fb8"/></linearGradient>
<radialGradient id="gGreen" cx="0.4" cy="0.35" r="0.7"><stop offset="0" stop-color="#5fd44a"/><stop offset="1" stop-color="#138a10"/></radialGradient>
<radialGradient id="gGlobe" cx="0.4" cy="0.35" r="0.7"><stop offset="0" stop-color="#8ec4ff"/><stop offset="0.6" stop-color="#2a74d8"/><stop offset="1" stop-color="#0d3f9c"/></radialGradient>
<radialGradient id="gBall" cx="0.35" cy="0.35" r="0.7"><stop offset="0" stop-color="#ffb080"/><stop offset="0.5" stop-color="#f04a10"/><stop offset="1" stop-color="#b02800"/></radialGradient>
<radialGradient id="gLens" cx="0.4" cy="0.4" r="0.6"><stop offset="0" stop-color="#e8f6ff"/><stop offset="1" stop-color="#7ab4dc"/></radialGradient>
<linearGradient id="gFold" x1="0" y1="0" x2="0" y2="1"><stop offset="0" stop-color="#fff8c0"/><stop offset="1" stop-color="#f0d040"/></linearGradient>
<linearGradient id="gLav" x1="0" y1="0" x2="0" y2="1"><stop offset="0" stop-color="#e6e6fb"/><stop offset="1" stop-color="#b4b4e6"/></linearGradient>
<linearGradient id="gGrid" x1="0" y1="0" x2="1" y2="1"><stop offset="0" stop-color="#ffffff"/><stop offset="1" stop-color="#dcdcf4"/></linearGradient>
<linearGradient id="gCube" x1="0" y1="0" x2="1" y2="1"><stop offset="0" stop-color="#9cc4ff"/><stop offset="1" stop-color="#1f4fc0"/></linearGradient>
<g id="bld"><rect x="0.5" y="0.5" width="15" height="15" fill="#fff" stroke="#c8302c"/><path d="M1 5 L7.5 2 L9 2.5 V14 H1Z" fill="#a0141e"/><path d="M10 3 L11.2 3.3 V14 H10Z" fill="#c8303a"/><path d="M12 4 L13.8 4.5 L14.2 5 V14 H12Z" fill="#d86070"/></g>
</defs>
<!-- title icon -->
<rect x="8.5" y="6.5" width="15" height="15" fill="#fff" stroke="#c0403c" stroke-width="1"/>
<path d="M8.5 11 L15.5 8 L17 8.5 V19.7 H8.5Z" fill="#a0141e"/>
<path d="M18 9 L19.2 9.3 V19.7 H18Z" fill="#c8303a"/>
<path d="M20 10 L21.8 10.5 L22.2 11 V19.7 H20Z" fill="#d86070"/>
<path d="M22.8 11 H23.3 V19.7 H22.8Z" fill="#e8a0a8"/>
<!-- window controls -->
<path d="M1340 14.5 H1350" stroke="#000" stroke-width="1"/>
<rect x="1385.5" y="9.5" width="9.5" height="9.5" fill="none" stroke="#000" stroke-width="1"/>
<path d="M1431 9 L1441 19 M1441 9 L1431 19" stroke="#000" stroke-width="1"/>
<!-- toolbar 1 disabled icons -->
<g fill="#a0a0a0">
<path d="M17 58 H27.6 L30.4 61 H33.5 L38.6 65 L47 72.3 V88 H29 V81 H17Z"/>
<path d="M56 65.3 L61.2 63.6 V60.1 H70.7 L72.5 58 H79.7 V63.9 H86 V82.8 L70.7 88 H65 L63.3 81.5 L60 80.5 L56 68Z"/>
<path d="M97 60.1 L102 58 H114.7 L123 61.2 V85 L115.5 86.6 L104.4 88 L97 81.7Z"/>
<path d="M134 84 L137 87.5 L163 72 L164 68 L160 65 L154 67 L156 62 L151 58 L147 62 L146 66 L140 63 L137 66 L139 70 L136 73 L141 75 L146 72 L148 75Z"/>
<path d="M260 62.5 H267.3 V58 H280.3 L288 65.3 V83.8 H281 V88 H260Z"/>
<path d="M301 62.5 H308.4 L311.8 58 H315.3 L319.4 62.5 H325 V70 H327.6 V88 H301Z"/>
<path d="M346 67 L349.5 84 L366 79.4 L361 75.6 C364 70 369 70 370 76 L371 80 L376 80 C377 68 373 61 366 61 C360 61 356 66 354 70Z"/>
<path d="M430 67 L426.5 84 L410 79.4 L415 75.6 C412 70 407 70 406 76 L405 80 L400 80 C399 68 403 61 410 61 C416 61 420 66 422 70Z"/>
<path d="M547 66 H559 L565 62.2 H577 V70 H567 L564 72 L563 76 H577 V83.5 H565 L560 77 L560 73.6 H547Z"/>
<rect x="595" y="59" width="28" height="27.5" rx="3"/>
</g>
<path d="M384 71 H391.5 L387.7 75.3Z M438 71 H445.5 L441.7 75.3Z" fill="#606060"/>
<!-- save -->
<rect x="174.5" y="59" width="27.5" height="27.5" rx="2.5" fill="url(#gBlue)" stroke="#0c3f9a" stroke-width="0.8"/>
<rect x="179" y="59.5" width="18" height="13.5" fill="#f2f2f2"/>
<path d="M181.5 63 H194.5 M181.5 66 H194.5 M181.5 69 H194.5" stroke="#b8b8b8" stroke-width="1"/>
<rect x="181" y="78" width="13" height="8.5" fill="#e6e6e6"/><rect x="182.8" y="79.5" width="4" height="6" fill="#1a64d0"/>
<!-- copy docs -->
<path d="M228.5 58.5 H243 L248.5 64 V84 H228.5Z" fill="#e8e4f4" stroke="#7a64b8"/>
<path d="M221.5 62.5 H236 L241.5 68 V87.5 H221.5Z" fill="#f6f8ff" stroke="#5870b0"/>
<rect x="224" y="70.5" width="14" height="13" fill="#0a10c8"/>
<path d="M226 74 H236 M226 78 H236" stroke="#c0c8f0" stroke-width="1.6"/>
<rect x="238" y="73" width="6" height="9" fill="#2030c0" opacity="0.7"/>
<!-- grid icons -->
<g>
<rect x="466.5" y="58.5" width="24" height="22" fill="url(#gGrid)" stroke="#a8a8a8"/>
<rect x="461.5" y="65.5" width="24" height="22" fill="url(#gGrid)" stroke="#999"/>
<path d="M469.5 65.5 V87.5 M477.5 65.5 V87.5 M461.5 72.5 H485.5 M461.5 80 H485.5 M474 58.5 V65.5 M482 58.5 V65.5 M485.5 68 H490.5 M485.5 74 H490.5" stroke="#a0a0a0" stroke-width="1"/>
<circle cx="468" cy="65" r="6" fill="#ffd040" opacity="0.85"/><path d="M465 62 L471 68 M471 62 L465 68" stroke="#fff" stroke-width="1.2"/>
<use href="#bld" x="476" y="73"/>
</g>
<g>
<rect x="505.5" y="58.5" width="24" height="22" fill="url(#gGrid)" stroke="#a8a8a8"/>
<rect x="500.5" y="65.5" width="24" height="22" fill="url(#gGrid)" stroke="#999"/>
<path d="M508.5 65.5 V87.5 M516.5 65.5 V87.5 M500.5 72.5 H524.5 M500.5 80 H524.5 M513 58.5 V65.5 M521 58.5 V65.5 M524.5 68 H529.5 M524.5 74 H529.5" stroke="#a0a0a0" stroke-width="1"/>
<use href="#bld" x="515" y="73"/>
<path d="M510 67 L523 74 L510 81.5Z" fill="#2a7ad8" stroke="#0d3f90" stroke-width="0.8"/>
</g>
<!-- gear -->
<g transform="translate(648,72.5)">
<path d="M-2.5 -15 H2.5 L3.5 -10.5 L7.5 -8.5 L11.5 -11 L15 -7.5 L12.5 -3.5 L13.5 0 L15 1 V5 L11.5 6 L10 9.5 L12 13 L8.5 15.5 L5 12.5 L1.5 13.5 L0 15.5 H-4 L-5 11.5 L-8.5 10 L-12 12.5 L-15 9 L-12.5 5.5 L-13.5 2 L-15.5 0 V-4 L-12 -5 L-10.5 -8.5 L-12.5 -12 L-9 -15 L-5.5 -12.5 L-2 -13Z" fill="url(#gLav)" stroke="#6c6cb4" stroke-width="0.9"/>
<circle cx="0" cy="0" r="8" fill="none" stroke="#a0a0d8" stroke-width="1"/>
<ellipse cx="0" cy="0" rx="4" ry="3" fill="#f0f0f0" stroke="#7878b8"/>
</g>
<!-- structure with magnifier -->
<g stroke="#808080" stroke-width="1.6" fill="none"><path d="M675 63 L688 61 L698.4 63.2 L697.9 78.3 L685.6 84.7 L676.3 77.7 Z M675 63 L684 66 L698.4 63.2 M684 66 L685.6 84.7"/></g>
<g fill="url(#gBall)"><circle cx="675.2" cy="63.2" r="3.3"/><circle cx="688" cy="60.8" r="3"/><circle cx="698.4" cy="63.2" r="3.3"/><circle cx="684" cy="66" r="3.5"/><circle cx="676.3" cy="77.7" r="3.3"/><circle cx="685.6" cy="84.7" r="3.5"/><circle cx="697.9" cy="78.3" r="3.3"/></g>
<path d="M692 78 L698 85" stroke="#f08a3a" stroke-width="3.2" stroke-linecap="round"/>
<circle cx="686.8" cy="72.5" r="6.5" fill="url(#gLens)" stroke="#707070" stroke-width="1.3"/>
<!-- brush -->
<path d="M727.5 66 L742.5 79.5 L731.5 88 L719 75.5Z" fill="#d86a10"/>
<path d="M727.5 66 L742.5 79.5 L735 85.5 L721.5 72.5Z" fill="#f0c000"/>
<path d="M724 70 L738 83" stroke="#ffe000" stroke-width="1.5" opacity="0.7"/>
<path d="M728 65 L730 63 L744.5 77 L742.5 79.5Z" fill="#c8c8d0"/>
<path d="M730 63.2 L737 62 L740.5 64.5 L745 58.5 C746.5 56.5 750 57 749.5 60 L743 67.5 L745 72.5 L744.3 77.2Z" fill="#4ccc3c" stroke="#1e9a1e" stroke-width="0.8"/>
<!-- help -->
<circle cx="781" cy="72.8" r="13.6" fill="#e8e8ee" stroke="#6a6a80" stroke-width="0.9"/>
<circle cx="781" cy="72.8" r="11.5" fill="#ffffff" opacity="0.6"/>
<circle cx="781" cy="72.8" r="10.6" fill="url(#gGreen)"/>
<path d="M776.8 69.5 C776.8 66.5 778.8 65.6 781.5 65.6 C784.5 65.6 786.6 67 786.6 69.6 C786.6 72 784.5 73 783.3 73.8 C782.7 74.3 782.7 75 782.7 76 H779.4 C779.4 74 779.6 72.8 781.3 71.8 C782.6 71 783.2 70.6 783.2 69.7 C783.2 68.8 782.5 68.4 781.6 68.4 C780.6 68.4 780 69 780 70.2Z M779.4 77.3 H782.8 V80 H779.4Z" fill="#fff"/>
<!-- book 1 -->
<path d="M806 66 L822 61.6 L834 74.7 L816 84.6Z" fill="#1b5fd0" stroke="#0a3a9a" stroke-width="0.8"/>
<path d="M816 84.6 L834 74.7 L834 78 L817 87Z" fill="#c8c8c8"/>
<path d="M806 66 L816 84.6 L817 87 L805 68Z" fill="#0e46b0"/>
<rect x="817" y="66" width="8" height="4" transform="rotate(-15 821 68)" fill="#6aa0f0"/>
<circle cx="812.6" cy="65.4" r="5.5" fill="#ffcf20" stroke="#ff4020" stroke-width="1.5" stroke-dasharray="2 1.2"/>
<!-- book 2 -->
<path d="M844 66 L861.4 61.6 L872.3 78 L852.6 84.6Z" fill="#1b5fd0" stroke="#0a3a9a" stroke-width="0.8"/>
<path d="M852.6 84.6 L872.3 78 L872 81 L853 87Z" fill="#c8c8c8"/>
<rect x="852" y="65" width="10" height="4" transform="rotate(-15 857 67)" fill="#6aa0f0"/>
<rect x="858.5" y="76" width="11" height="11" fill="#f4f4f4" stroke="#8a8a8a"/>
<path d="M860 79 L864 85 L872 72" stroke="#1a50d0" stroke-width="2.4" fill="none"/>
<!-- folder 1 -->
<path d="M886 61 H894 L896 59.5 H912 V83 H886Z" fill="#fff6c0" stroke="#c8a020" stroke-width="0.8"/>
<path d="M883 68 H906 L913 86.5 H889Z" fill="url(#gFold)" stroke="#c8a020" stroke-width="0.8"/>
<use href="#bld" x="898" y="73"/>
<!-- folder 2 -->
<path d="M925 61 H933 L935 59.5 H951.5 V83 H925Z" fill="#fff6c0" stroke="#c8a020" stroke-width="0.8"/>
<path d="M922 68 H945 L952 86.5 H928Z" fill="url(#gFold)" stroke="#c8a020" stroke-width="0.8"/>
<path d="M931 71 H936 V67 L942 74 L936 81 V77 H931Z" fill="#90e070" opacity="0.85"/>
<path d="M925 76 C921 68 925 61 932 60 L931 57.5 L938 62 L932 66.5 L932 63.5 C928 65 926 70 928 76Z" fill="#2ea82a"/>
<!-- film reel -->
<path d="M962 77 H990 V86 C985 88 978 84 972 87 L962 86Z" fill="#6a6a6a"/>
<path d="M965 80 C972 77 980 83 988 80" stroke="#a8a8a8" stroke-width="1.5" fill="none"/>
<ellipse cx="976" cy="66.5" rx="13.5" ry="9" fill="#8a8a8a"/>
<ellipse cx="976" cy="65.5" rx="12.5" ry="7.8" fill="#d8d8f4"/>
<g fill="#707070"><ellipse cx="976" cy="60.5" rx="3" ry="2"/><ellipse cx="969" cy="64" rx="3" ry="2"/><ellipse cx="983" cy="64" rx="3" ry="2"/><ellipse cx="971.5" cy="69" rx="3" ry="2"/><ellipse cx="980.5" cy="69" rx="3" ry="2"/><ellipse cx="976" cy="65" rx="1.5" ry="1.2"/></g>
<!-- chat -->
<path d="M1003 72 C998 70 999.5 58 1009.5 58 C1020 58 1020 72 1010 72.5 L1008 77Z" fill="url(#gLav)" stroke="#9898cc" stroke-width="0.8"/>
<path d="M1005 62.5 H1014 M1005 65 H1014 M1005 67.5 H1014" stroke="#8484b8" stroke-width="0.8"/>
<path d="M1014 82 C1009 80 1010.5 69 1020.5 69 C1031 69 1031 83 1022 83.5 L1021 88Z" fill="url(#gLav)" stroke="#9898cc" stroke-width="0.8"/>
<path d="M1016 73.5 H1025 M1016 76 H1025 M1016 78.5 H1025" stroke="#8484b8" stroke-width="0.8"/>
<!-- envelope -->
<path d="M1046.5 68 L1061 57.5 L1075.5 68 V86.5 H1046.5Z" fill="#e6e6fa" stroke="#8a8ac8" stroke-width="0.8"/>
<rect x="1050" y="63" width="20" height="12" fill="#fff4d8"/>
<path d="M1046.5 68 L1061 79 L1075.5 68 M1046.5 86.5 L1058 76 M1075.5 86.5 L1064 76" stroke="#8a8ac8" stroke-width="0.8" fill="#dcdcf8"/>
<path d="M1055 83 L1073 59.5 L1076 62 L1058 85Z" fill="#1a5ad0" stroke="#0a2a80" stroke-width="0.6"/>
<!-- globe -->
<circle cx="1101" cy="72.5" r="15" fill="url(#gGlobe)" stroke="#1a4ab0" stroke-width="0.8"/>
<path d="M1089 70 C1092 64 1097 65 1098 70 C1100 76 1096 80 1099 86 C1093 84 1090 80 1089 75Z M1100 60 L1106 59 L1104 64Z M1108 66 C1112 65 1115 70 1114 76 C1111 78 1109 73 1108 70Z" fill="#29b128"/>
<!-- toolbar2 icons -->
<g stroke="#8a8a8a" stroke-width="1.8" fill="none"><path d="M297.2 104.3 L310.2 102.5 L321.3 104.3 L320.4 120 L309.3 126.5 L298.2 120Z M297.2 104.3 L306.5 109 L321.3 104.3 M306.5 109 L309.3 126.5 M298.2 120 L310.2 115.4 L320.4 120 M310.2 102.5 L310.2 115.4"/></g>
<g fill="url(#gBall)"><circle cx="297.2" cy="104.3" r="3.5"/><circle cx="310.2" cy="102.5" r="3"/><circle cx="321.3" cy="104.3" r="3.5"/><circle cx="306.5" cy="109" r="4.5"/><circle cx="298.2" cy="120" r="3.5"/><circle cx="309.3" cy="126.5" r="4"/><circle cx="320.4" cy="120" r="3.5"/></g>
<!-- chip -->
<defs><linearGradient id="gChip" x1="0" y1="0" x2="1" y2="1"><stop offset="0" stop-color="#5a5a5a"/><stop offset="0.5" stop-color="#a8a8a8"/><stop offset="1" stop-color="#6a6a6a"/></linearGradient></defs>
<path d="M521.5 115.5 L539 103.3 L548.8 106 L531.3 120.8 L531.3 126.8 L521.3 121.5Z" fill="#303030"/>
<path d="M522.5 116.3 L539.2 104.5 L547.5 106.8 L531 120Z" fill="url(#gChip)"/>
<path d="M522.5 117.5 L530.5 121.5 V125.5 L522.5 121Z" fill="#9a9a9a"/>
<path d="M531.3 120.8 L548.8 106 L549.5 110 L531.8 126.8Z" fill="#202020"/>
<g fill="#d8d8d8" stroke="#10108a" stroke-width="0.7"><path d="M534.5 121.5 l3 -2.3 v4.5 l-3 2.3Z"/><path d="M538.7 118 l3 -2.3 v4.5 l-3 2.3Z"/><path d="M542.8 114.3 l3 -2.3 v4.5 l-3 2.3Z"/><path d="M547 110.7 l2.6 -2 v4.3 l-2.6 2Z"/></g>
<path d="M522 113 l1.5 -1.5 M525.5 123.5 l1.5 1.5 M534 104 l1.5 -1 M543 103.5 l1.5 0.5" stroke="#2020b0" stroke-width="1"/>
<!-- toolbar4 -->
<path d="M990.5 114 L997 100.5 L1004 114 L1000 114 L1000 117 L994 117 L994 114Z" fill="#f05020" stroke="#c02a10" stroke-width="0.6"/>
<path d="M995 112 C994 118 997 122 1003 122 V119 L1008 124 L1003 128.5 V125.5 C996 125.5 992 120 995 112Z" fill="#38b832"/>
<path d="M1005 117 L1011 113.5 L1020 115.5 V126 L1013 129.5 L1005 127Z" fill="url(#gCube)" stroke="#0d2a90" stroke-width="0.8"/>
<path d="M1005 117 L1013 119.5 L1020 115.5 M1013 119.5 V129.5" stroke="#0d2a90" stroke-width="0.6" fill="none"/>
<rect x="1038.5" y="101" width="27" height="27" rx="2" fill="#f4f8ff" stroke="#90b0e0"/>
<path d="M1042 106 H1062 M1042 109 H1060 M1042 112 H1058 M1042 115 H1052 M1042 118 H1050 M1042 121 H1050 M1042 124 H1050" stroke="#a8a8a8" stroke-width="1.4" stroke-dasharray="4 1.5"/>
<circle cx="1058.7" cy="122" r="8.3" fill="url(#gGreen)"/>
<path d="M1054.5 122 L1058 125.5 L1063 118.5" stroke="#fff" stroke-width="2.2" fill="none"/>
<path d="M1097.1 100.2 L1113.7 116.2 L1100.3 129 L1084.3 113Z" fill="#1a1a28" stroke="#10308a" stroke-width="0.6"/>
<path d="M1093.5 106.5 L1106.5 119.5 L1100 125.5 L1087 112.5Z" fill="#7a9ee6"/>
<path d="M1097.8 110.8 L1091.5 117 M1102 115 L1095.8 121.2" stroke="#222" stroke-width="1"/>
<g fill="#e8e8e8"><circle cx="1097" cy="102.5" r="0.9"/><circle cx="1101" cy="106.3" r="0.9"/><circle cx="1086.5" cy="112.8" r="0.9"/><circle cx="1090" cy="116.3" r="0.9"/><circle cx="1093.3" cy="119.6" r="0.9"/><circle cx="1096.6" cy="123" r="0.9"/><circle cx="1100" cy="126.5" r="0.9"/></g>
<g fill="#40d040"><circle cx="1104.5" cy="109.5" r="0.9"/><circle cx="1108" cy="113" r="0.9"/><circle cx="1111" cy="116" r="0.9"/></g>
<path d="M1124 119 C1124 116 1128 117 1132 118 L1150 118 C1153 118 1153 121 1152 125 L1150 129 C1145 130 1138 126 1136 129 L1124 130Z" fill="#6e6e6e"/>
<path d="M1126 124 C1130 121 1134 124 1137 126" stroke="#c8c8c8" stroke-width="1.2" fill="none"/>
<ellipse cx="1137.7" cy="109" rx="14.5" ry="9" fill="#8c8c8c"/>
<ellipse cx="1137.7" cy="108" rx="13" ry="7.8" fill="#dcdcf6"/>
<g fill="#6a6a6a"><ellipse cx="1136.5" cy="103.5" rx="3.6" ry="2.2"/><ellipse cx="1129.5" cy="107" rx="3.6" ry="2.2"/><ellipse cx="1145.5" cy="106.5" rx="3.6" ry="2.2"/><ellipse cx="1134" cy="112.5" rx="3.5" ry="2.2"/><ellipse cx="1143" cy="112" rx="3.5" ry="2.2"/><ellipse cx="1138" cy="108.5" rx="2" ry="1.4"/></g>
<path d="M1141.4 116.8 L1152.6 122.8 L1141.4 129Z" fill="#4cc83e" stroke="#1e8a1e" stroke-width="0.7"/>
</svg>

<svg class="a" style="left:1380px;top:230px" width="70" height="180" viewBox="1380 230 70 180">
<defs>
<linearGradient id="gCube2" x1="0" y1="0" x2="1" y2="1"><stop offset="0" stop-color="#a8ccff"/><stop offset="1" stop-color="#2456c8"/></linearGradient>
<linearGradient id="gRedA" x1="0" y1="0" x2="1" y2="1"><stop offset="0" stop-color="#ffd0a0"/><stop offset="0.5" stop-color="#ff6a30"/><stop offset="1" stop-color="#d02000"/></linearGradient>
<linearGradient id="gBar" x1="0" y1="0" x2="1" y2="0"><stop offset="0" stop-color="#9a9a9a"/><stop offset="0.5" stop-color="#f4f4f4"/><stop offset="1" stop-color="#a0a0a0"/></linearGradient>
<linearGradient id="gChk" x1="0" y1="0" x2="1" y2="1"><stop offset="0" stop-color="#ffffff"/><stop offset="1" stop-color="#d0d0d0"/></linearGradient>
<radialGradient id="gSph" cx="0.4" cy="0.35" r="0.7"><stop offset="0" stop-color="#9ad4ff"/><stop offset="0.6" stop-color="#1a8af0"/><stop offset="1" stop-color="#0a50b0"/></radialGradient>
<linearGradient id="gLay" x1="0" y1="0" x2="0" y2="1"><stop offset="0" stop-color="#7ab8f8"/><stop offset="1" stop-color="#2a72d8"/></linearGradient>
</defs>
<!-- icon 1 -->
<path d="M1407.2 236 L1414.5 250.5 L1410.5 250.5 L1410 253 L1404.5 253 L1404 250.5 L1400 250.5Z" fill="url(#gRedA)" stroke="#c02a10" stroke-width="0.7"/>
<path d="M1404.5 250 C1403.5 256 1406 260 1412 260.5 L1412 257 L1417 262 L1412 266.5 L1412 263.5 C1404 263.5 1400.5 257 1404.5 250Z" fill="#3ec83a" stroke="#1a8a1a" stroke-width="0.5"/>
<path d="M1415.5 253.5 L1422 249.5 L1430 252 V262.5 L1423 266.5 L1415.5 263.5Z" fill="url(#gCube2)" stroke="#0d2a90" stroke-width="0.8"/>
<path d="M1415.5 253.5 L1423 256 L1430 252 M1423 256 V266.5" stroke="#0d2a90" stroke-width="0.7" fill="none"/>
<path d="M1423 256 L1430 252 V262.5 L1423 266.5Z" fill="#1a3aa0" opacity="0.55"/>
<!-- checklist -->
<path d="M1404.5 280.5 H1425.5 V307.5 H1404.5Z" fill="url(#gChk)" stroke="#2a90e8" stroke-width="2.2" stroke-linejoin="round"/>
<rect x="1410.5" y="286.5" width="5.5" height="5.5" fill="#c8c8c8" stroke="#9a9a9a" stroke-width="0.6"/>
<rect x="1410.5" y="297" width="5.5" height="5.5" fill="#c8c8c8" stroke="#9a9a9a" stroke-width="0.6"/>
<path d="M1410 288 L1413 292 L1420.5 283.5 M1410 298.5 L1413 302.5 L1420.5 294" stroke="#d81010" stroke-width="2" fill="none"/>
<!-- axes -->
<path d="M1401.5 345 L1429 335.5 M1407 333.5 L1429 349" stroke="#8a8a8a" stroke-width="5.5" stroke-linecap="round"/>
<path d="M1401.5 345 L1429 335.5 M1407 333.5 L1429 349" stroke="#e6e6e6" stroke-width="2.5" stroke-linecap="round"/>
<rect x="1413" y="324" width="6.5" height="29.5" rx="1.5" fill="url(#gBar)"/>
<path d="M1421 345 L1428.5 350" stroke="#30b030" stroke-width="1"/>
<circle cx="1416.2" cy="340" r="5.3" fill="url(#gSph)"/>
<!-- layers -->
<path d="M1400.8 385 L1414.3 377 L1429 384 L1414.3 392Z" fill="#b0b0b0"/>
<path d="M1400.8 385 L1414.3 392 L1429 384 V387 L1414.3 396.5 L1400.8 388Z" fill="#8a8a8a"/>
<path d="M1400.8 380 L1414.3 372 L1429 379 L1414.3 387Z" fill="#90d0a8"/>
<path d="M1400.8 380 L1414.3 387 L1429 379 V382 L1414.3 390.5 L1400.8 383Z" fill="#4a9a6a"/>
<path d="M1400.8 376.7 L1414.3 369 L1429 375.4 L1414.3 383Z" fill="url(#gLay)"/>
<path d="M1400.8 376.7 L1414.3 383 L1429 375.4 V377.5 L1414.3 385.5 L1400.8 379Z" fill="#1a3a9a"/>
</svg>

</body></html>
